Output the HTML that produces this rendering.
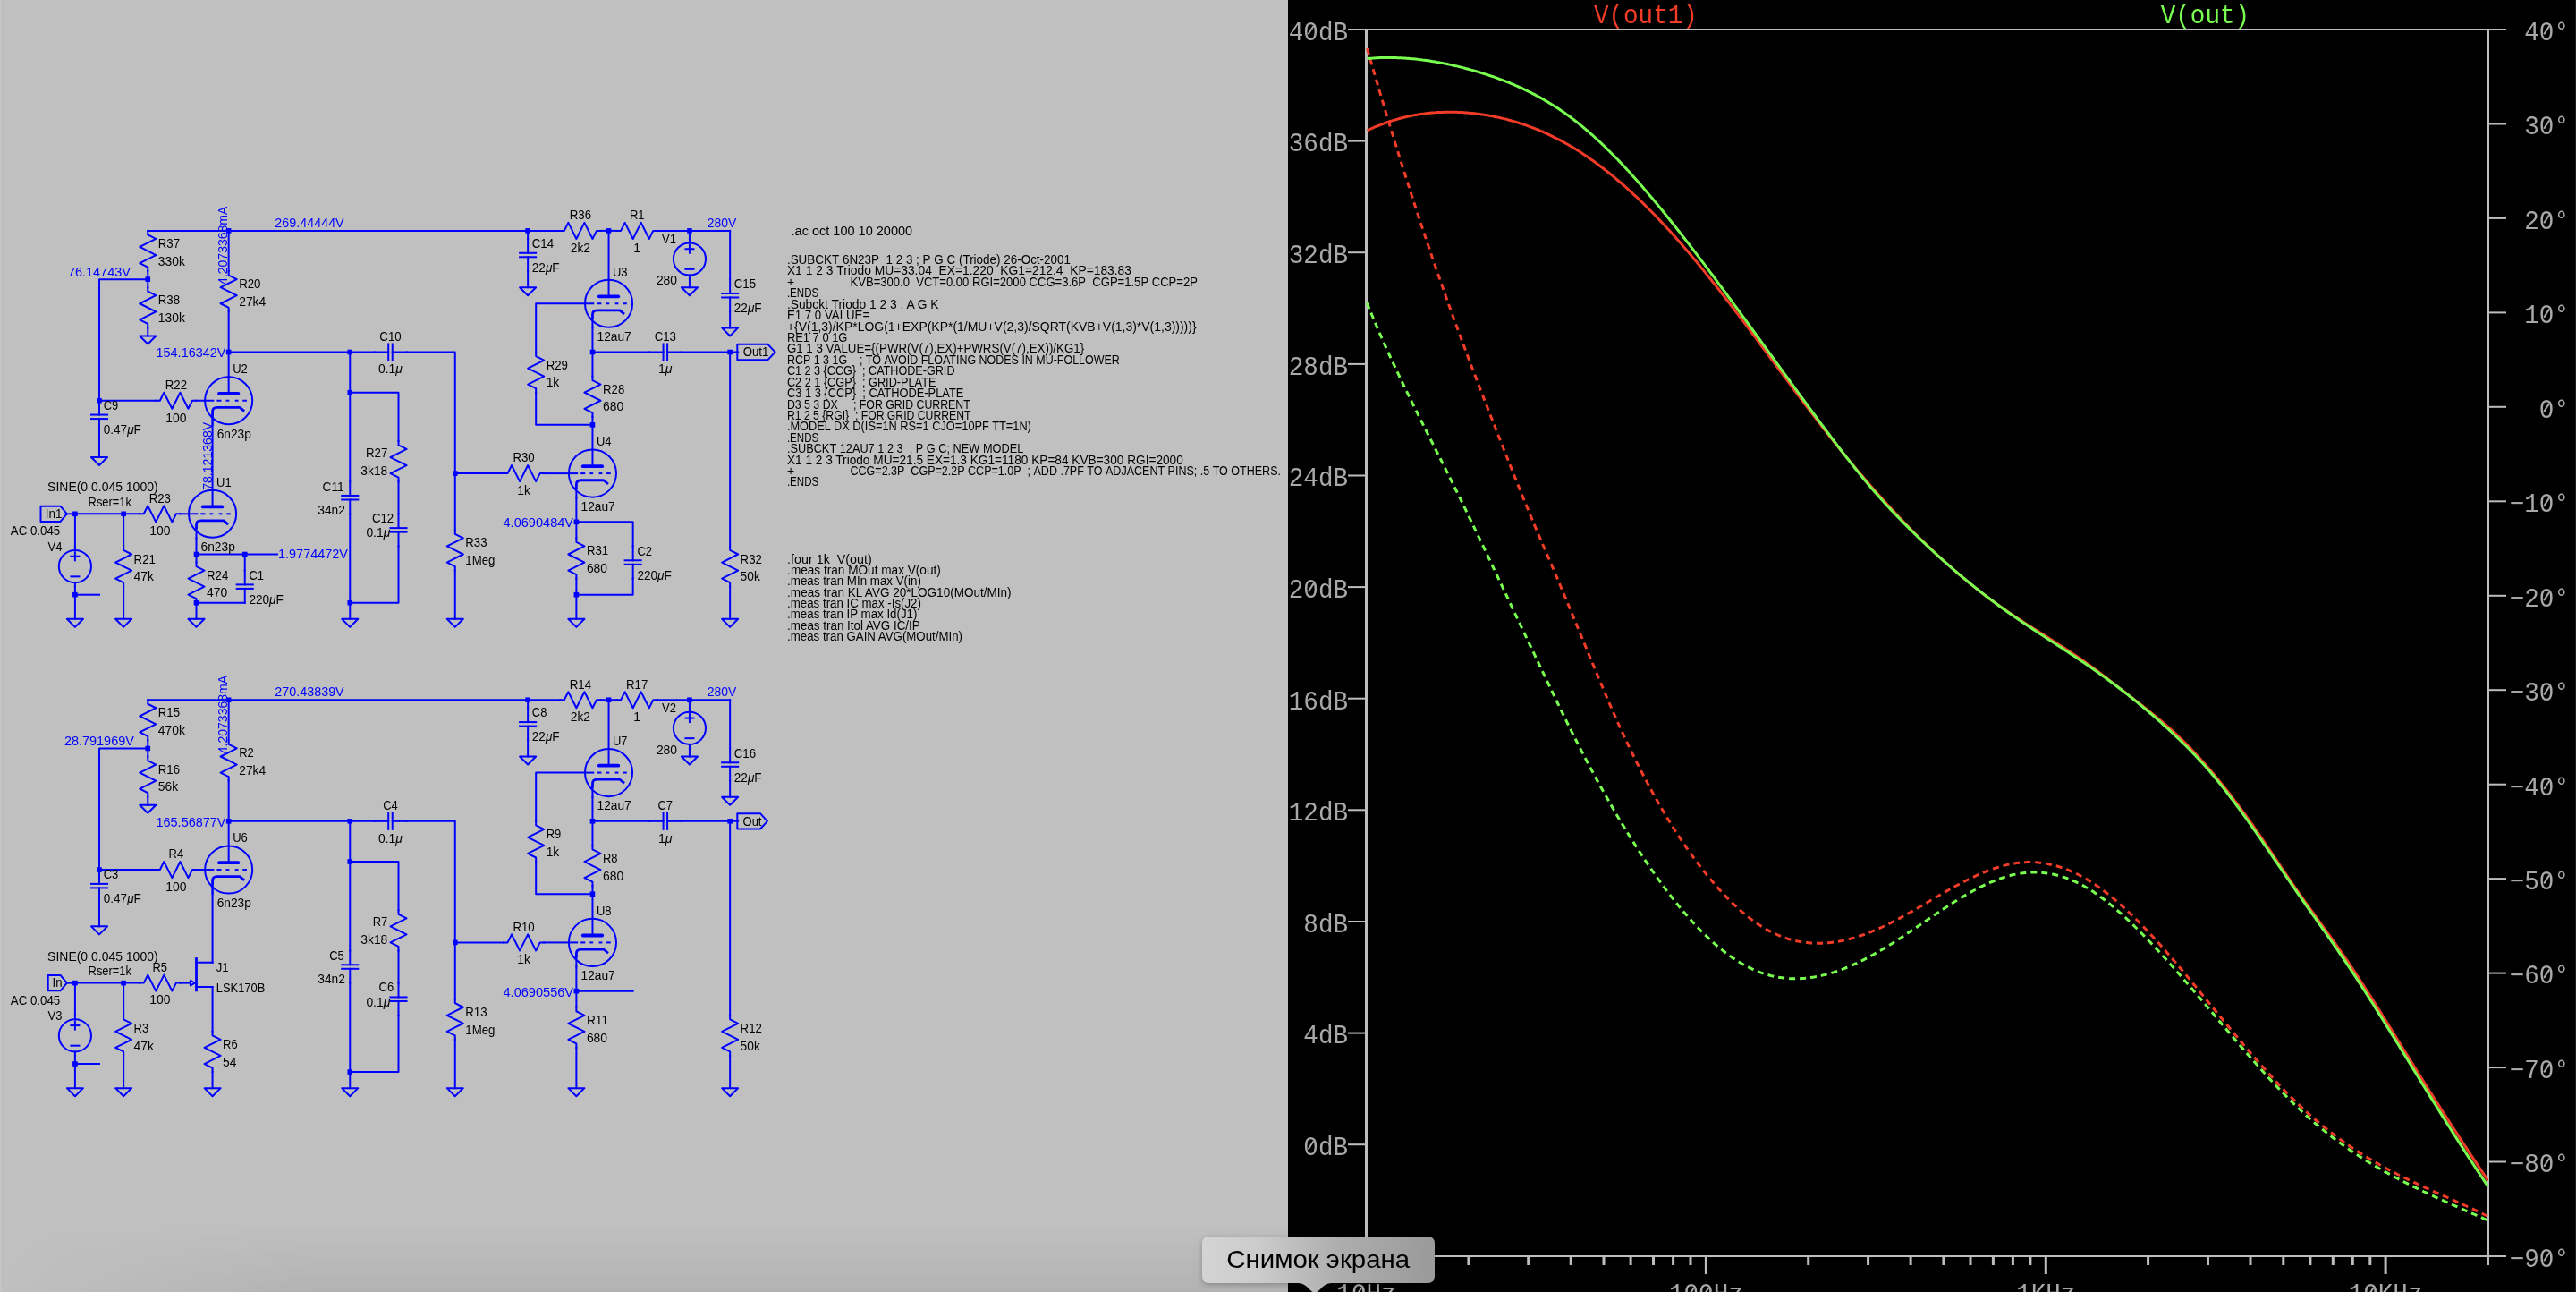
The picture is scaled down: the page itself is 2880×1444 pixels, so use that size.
<!DOCTYPE html><html><head><meta charset="utf-8"><style>html,body{margin:0;padding:0;width:2880px;height:1444px;overflow:hidden;background:#c0c0c0}svg{display:block;will-change:transform}</style></head><body>
<svg width="2880" height="1444" viewBox="0 0 2880 1444">
<rect x="0" y="0" width="1440" height="1444" fill="#C0C0C0"/>
<g fill="none" stroke="#0000FF" stroke-width="2" stroke-linecap="square" stroke-linejoin="round">
<polyline points="165.26,257.90 626.30,257.90"/>
<polyline points="626.30,257.90 630.82,257.90 635.34,248.86 644.38,266.94 653.42,248.86 662.46,266.94 666.98,257.90 671.50,257.90"/>
<polyline points="671.50,257.90 689.58,257.90"/>
<polyline points="689.58,257.90 694.10,257.90 698.62,248.86 707.66,266.94 716.70,248.86 725.74,266.94 730.26,257.90 734.78,257.90"/>
<polyline points="734.78,257.90 816.14,257.90"/>
<rect x="252.86" y="255.10" width="5.6" height="5.6" fill="#0000FF" stroke="none"/>
<rect x="587.34" y="255.10" width="5.6" height="5.6" fill="#0000FF" stroke="none"/>
<rect x="677.74" y="255.10" width="5.6" height="5.6" fill="#0000FF" stroke="none"/>
<rect x="768.14" y="255.10" width="5.6" height="5.6" fill="#0000FF" stroke="none"/>
<polyline points="165.26,257.90 165.26,262.42 174.30,266.94 156.22,275.98 174.30,285.02 156.22,294.06 165.26,298.58 165.26,303.10"/>
<polyline points="165.26,303.10 165.26,321.18"/>
<rect x="162.46" y="309.34" width="5.6" height="5.6" fill="#0000FF" stroke="none"/>
<polyline points="165.26,321.18 165.26,325.70 174.30,330.22 156.22,339.26 174.30,348.30 156.22,357.34 165.26,361.86 165.26,366.38"/>
<polyline points="165.26,366.38 165.26,375.42"/>
<polygon points="156.22,375.42 174.30,375.42 165.26,384.46"/>
<polyline points="165.26,312.14 111.02,312.14 111.02,447.74"/>
<rect x="108.22" y="444.94" width="5.6" height="5.6" fill="#0000FF" stroke="none"/>
<line x1="111.02" y1="447.74" x2="111.02" y2="463.56"/>
<line x1="101.98" y1="463.56" x2="120.06" y2="463.56"/>
<line x1="101.98" y1="468.08" x2="120.06" y2="468.08"/>
<line x1="111.02" y1="468.08" x2="111.02" y2="483.90"/>
<polyline points="111.02,483.90 111.02,511.02"/>
<polygon points="101.98,511.02 120.06,511.02 111.02,520.06"/>
<polyline points="111.02,447.74 174.30,447.74"/>
<polyline points="174.30,447.74 178.82,447.74 183.34,438.70 192.38,456.78 201.42,438.70 210.46,456.78 214.98,447.74 219.50,447.74"/>
<polyline points="219.50,447.74 228.54,447.74"/>
<polyline points="255.66,303.10 255.66,307.62 264.70,312.14 246.62,321.18 264.70,330.22 246.62,339.26 255.66,343.78 255.66,348.30"/>
<polyline points="255.66,257.90 255.66,303.10"/>
<polyline points="255.66,348.30 255.66,420.62"/>
<rect x="252.86" y="390.70" width="5.6" height="5.6" fill="#0000FF" stroke="none"/>
<circle cx="255.66" cy="447.74" r="26.55"/>
<line x1="255.66" y1="421.18" x2="255.66" y2="439.83"/>
<line x1="244.93" y1="439.83" x2="266.39" y2="439.83" stroke-width="3.8" stroke-linecap="round"/>
<line x1="228.54" y1="447.74" x2="239.39" y2="447.74" stroke-linecap="butt"/>
<line x1="242.38" y1="447.74" x2="247.47" y2="447.74" stroke-linecap="butt"/>
<line x1="252.55" y1="447.74" x2="256.34" y2="447.74" stroke-linecap="butt"/>
<line x1="262.78" y1="447.74" x2="266.56" y2="447.74" stroke-linecap="butt"/>
<line x1="271.25" y1="447.74" x2="275.94" y2="447.74" stroke-linecap="butt"/>
<path d="M237.58,464.69 L237.58,460.17 Q237.58,455.37 242.66,455.37 L268.09,455.37 L273.18,459.60" stroke-width="2.8" stroke-linecap="butt"/>
<line x1="237.58" y1="464.69" x2="237.58" y2="474.86"/>
<polyline points="255.66,393.50 418.38,393.50"/>
<rect x="388.46" y="390.70" width="5.6" height="5.6" fill="#0000FF" stroke="none"/>
<line x1="418.38" y1="393.50" x2="434.20" y2="393.50"/>
<line x1="434.20" y1="384.46" x2="434.20" y2="402.54"/>
<line x1="438.72" y1="384.46" x2="438.72" y2="402.54"/>
<line x1="438.72" y1="393.50" x2="454.54" y2="393.50"/>
<polyline points="454.54,393.50 508.78,393.50 508.78,592.38"/>
<polyline points="508.78,592.38 508.78,596.90 517.82,601.42 499.74,610.46 517.82,619.50 499.74,628.54 508.78,633.06 508.78,637.58"/>
<polyline points="508.78,637.58 508.78,691.82"/>
<polygon points="499.74,691.82 517.82,691.82 508.78,700.86"/>
<rect x="505.98" y="526.30" width="5.6" height="5.6" fill="#0000FF" stroke="none"/>
<polyline points="391.26,393.50 391.26,538.14"/>
<line x1="391.26" y1="538.14" x2="391.26" y2="553.96"/>
<line x1="382.22" y1="553.96" x2="400.30" y2="553.96"/>
<line x1="382.22" y1="558.48" x2="400.30" y2="558.48"/>
<line x1="391.26" y1="558.48" x2="391.26" y2="574.30"/>
<polyline points="391.26,574.30 391.26,691.82"/>
<polygon points="382.22,691.82 400.30,691.82 391.26,700.86"/>
<rect x="388.46" y="435.90" width="5.6" height="5.6" fill="#0000FF" stroke="none"/>
<rect x="388.46" y="670.94" width="5.6" height="5.6" fill="#0000FF" stroke="none"/>
<polyline points="391.26,438.70 445.50,438.70 445.50,492.94"/>
<polyline points="445.50,492.94 445.50,497.46 454.54,501.98 436.46,511.02 454.54,520.06 436.46,529.10 445.50,533.62 445.50,538.14"/>
<polyline points="445.50,538.14 445.50,574.30"/>
<line x1="445.50" y1="574.30" x2="445.50" y2="590.12"/>
<line x1="436.46" y1="590.12" x2="454.54" y2="590.12"/>
<line x1="436.46" y1="594.64" x2="454.54" y2="594.64"/>
<line x1="445.50" y1="594.64" x2="445.50" y2="610.46"/>
<polyline points="445.50,610.46 445.50,673.74 391.26,673.74"/>
<polyline points="508.78,529.10 563.02,529.10"/>
<polyline points="563.02,529.10 567.54,529.10 572.06,520.06 581.10,538.14 590.14,520.06 599.18,538.14 603.70,529.10 608.22,529.10"/>
<polyline points="608.22,529.10 635.34,529.10"/>
<line x1="590.14" y1="266.94" x2="590.14" y2="282.76"/>
<line x1="581.10" y1="282.76" x2="599.18" y2="282.76"/>
<line x1="581.10" y1="287.28" x2="599.18" y2="287.28"/>
<line x1="590.14" y1="287.28" x2="590.14" y2="303.10"/>
<polyline points="590.14,257.90 590.14,266.94"/>
<polyline points="590.14,303.10 590.14,321.18"/>
<polygon points="581.10,321.18 599.18,321.18 590.14,330.22"/>
<line x1="770.94" y1="266.94" x2="770.94" y2="271.46"/>
<circle cx="770.94" cy="289.54" r="18.08"/>
<line x1="770.94" y1="307.62" x2="770.94" y2="312.14"/>
<line x1="766.42" y1="278.24" x2="775.46" y2="278.24"/>
<line x1="770.94" y1="273.72" x2="770.94" y2="282.76"/>
<line x1="766.42" y1="300.84" x2="775.46" y2="300.84"/>
<polyline points="770.94,257.90 770.94,266.94"/>
<polyline points="770.94,312.14 770.94,321.18"/>
<polygon points="761.90,321.18 779.98,321.18 770.94,330.22"/>
<polyline points="816.14,257.90 816.14,312.14"/>
<line x1="816.14" y1="312.14" x2="816.14" y2="327.96"/>
<line x1="807.10" y1="327.96" x2="825.18" y2="327.96"/>
<line x1="807.10" y1="332.48" x2="825.18" y2="332.48"/>
<line x1="816.14" y1="332.48" x2="816.14" y2="348.30"/>
<polyline points="816.14,348.30 816.14,366.38"/>
<polygon points="807.10,366.38 825.18,366.38 816.14,375.42"/>
<polyline points="680.54,257.90 680.54,312.14"/>
<circle cx="680.54" cy="339.26" r="26.55"/>
<line x1="680.54" y1="312.70" x2="680.54" y2="331.35"/>
<line x1="669.80" y1="331.35" x2="691.27" y2="331.35" stroke-width="3.8" stroke-linecap="round"/>
<line x1="653.42" y1="339.26" x2="664.27" y2="339.26" stroke-linecap="butt"/>
<line x1="667.26" y1="339.26" x2="672.35" y2="339.26" stroke-linecap="butt"/>
<line x1="677.43" y1="339.26" x2="681.22" y2="339.26" stroke-linecap="butt"/>
<line x1="687.66" y1="339.26" x2="691.44" y2="339.26" stroke-linecap="butt"/>
<line x1="696.13" y1="339.26" x2="700.82" y2="339.26" stroke-linecap="butt"/>
<path d="M662.46,356.21 L662.46,351.69 Q662.46,346.89 667.54,346.89 L692.97,346.89 L698.05,351.12" stroke-width="2.8" stroke-linecap="butt"/>
<line x1="662.46" y1="356.21" x2="662.46" y2="366.38"/>
<polyline points="653.42,339.26 599.18,339.26 599.18,393.50"/>
<polyline points="599.18,393.50 599.18,398.02 608.22,402.54 590.14,411.58 608.22,420.62 590.14,429.66 599.18,434.18 599.18,438.70"/>
<polyline points="599.18,438.70 599.18,474.86 662.46,474.86"/>
<rect x="659.66" y="472.06" width="5.6" height="5.6" fill="#0000FF" stroke="none"/>
<polyline points="662.46,366.38 662.46,420.62"/>
<rect x="659.66" y="390.70" width="5.6" height="5.6" fill="#0000FF" stroke="none"/>
<polyline points="662.46,420.62 662.46,425.14 671.50,429.66 653.42,438.70 671.50,447.74 653.42,456.78 662.46,461.30 662.46,465.82"/>
<polyline points="662.46,465.82 662.46,501.98"/>
<polyline points="662.46,393.50 725.74,393.50"/>
<line x1="725.74" y1="393.50" x2="741.56" y2="393.50"/>
<line x1="741.56" y1="384.46" x2="741.56" y2="402.54"/>
<line x1="746.08" y1="384.46" x2="746.08" y2="402.54"/>
<line x1="746.08" y1="393.50" x2="761.90" y2="393.50"/>
<polyline points="761.90,393.50 825.18,393.50"/>
<rect x="813.34" y="390.70" width="5.6" height="5.6" fill="#0000FF" stroke="none"/>
<polyline points="816.14,393.50 816.14,610.46"/>
<polyline points="816.14,610.46 816.14,614.98 825.18,619.50 807.10,628.54 825.18,637.58 807.10,646.62 816.14,651.14 816.14,655.66"/>
<polyline points="816.14,655.66 816.14,691.82"/>
<polygon points="807.10,691.82 825.18,691.82 816.14,700.86"/>
<circle cx="662.46" cy="529.10" r="26.55"/>
<line x1="662.46" y1="502.54" x2="662.46" y2="521.19"/>
<line x1="651.72" y1="521.19" x2="673.19" y2="521.19" stroke-width="3.8" stroke-linecap="round"/>
<line x1="635.34" y1="529.10" x2="646.19" y2="529.10" stroke-linecap="butt"/>
<line x1="649.18" y1="529.10" x2="654.27" y2="529.10" stroke-linecap="butt"/>
<line x1="659.35" y1="529.10" x2="663.14" y2="529.10" stroke-linecap="butt"/>
<line x1="669.58" y1="529.10" x2="673.36" y2="529.10" stroke-linecap="butt"/>
<line x1="678.05" y1="529.10" x2="682.74" y2="529.10" stroke-linecap="butt"/>
<path d="M644.38,546.05 L644.38,541.53 Q644.38,536.73 649.46,536.73 L674.89,536.73 L679.97,540.96" stroke-width="2.8" stroke-linecap="butt"/>
<line x1="644.38" y1="546.05" x2="644.38" y2="556.22"/>
<polyline points="644.38,556.22 644.38,601.42"/>
<rect x="641.58" y="580.54" width="5.6" height="5.6" fill="#0000FF" stroke="none"/>
<polyline points="644.38,601.42 644.38,605.94 653.42,610.46 635.34,619.50 653.42,628.54 635.34,637.58 644.38,642.10 644.38,646.62"/>
<polyline points="644.38,583.34 707.66,583.34 707.66,610.46"/>
<line x1="707.66" y1="610.46" x2="707.66" y2="626.28"/>
<line x1="698.62" y1="626.28" x2="716.70" y2="626.28"/>
<line x1="698.62" y1="630.80" x2="716.70" y2="630.80"/>
<line x1="707.66" y1="630.80" x2="707.66" y2="646.62"/>
<polyline points="707.66,646.62 707.66,664.70 644.38,664.70"/>
<rect x="641.58" y="661.90" width="5.6" height="5.6" fill="#0000FF" stroke="none"/>
<polyline points="644.38,646.62 644.38,691.82"/>
<polygon points="635.34,691.82 653.42,691.82 644.38,700.86"/>
<polyline points="83.90,574.30 156.22,574.30"/>
<rect x="81.10" y="571.50" width="5.6" height="5.6" fill="#0000FF" stroke="none"/>
<rect x="135.34" y="571.50" width="5.6" height="5.6" fill="#0000FF" stroke="none"/>
<polyline points="156.22,574.30 160.74,574.30 165.26,565.26 174.30,583.34 183.34,565.26 192.38,583.34 196.90,574.30 201.42,574.30"/>
<line x1="83.90" y1="610.46" x2="83.90" y2="614.98"/>
<circle cx="83.90" cy="633.06" r="18.08"/>
<line x1="83.90" y1="651.14" x2="83.90" y2="655.66"/>
<line x1="79.38" y1="621.76" x2="88.42" y2="621.76"/>
<line x1="83.90" y1="617.24" x2="83.90" y2="626.28"/>
<line x1="79.38" y1="644.36" x2="88.42" y2="644.36"/>
<polyline points="83.90,574.30 83.90,610.46"/>
<polyline points="83.90,655.66 83.90,691.82"/>
<rect x="81.10" y="661.90" width="5.6" height="5.6" fill="#0000FF" stroke="none"/>
<polyline points="83.90,664.70 111.02,664.70"/>
<polygon points="74.86,691.82 92.94,691.82 83.90,700.86"/>
<polyline points="138.14,574.30 138.14,610.46"/>
<polyline points="138.14,610.46 138.14,614.98 147.18,619.50 129.10,628.54 147.18,637.58 129.10,646.62 138.14,651.14 138.14,655.66"/>
<polyline points="138.14,655.66 138.14,691.82"/>
<polygon points="129.10,691.82 147.18,691.82 138.14,700.86"/>
<polyline points="201.42,574.30 210.46,574.30"/>
<polyline points="237.58,465.82 237.58,547.18"/>
<circle cx="237.58" cy="574.30" r="26.55"/>
<line x1="237.58" y1="547.75" x2="237.58" y2="566.39"/>
<line x1="226.84" y1="566.39" x2="248.31" y2="566.39" stroke-width="3.8" stroke-linecap="round"/>
<line x1="210.46" y1="574.30" x2="221.31" y2="574.30" stroke-linecap="butt"/>
<line x1="224.30" y1="574.30" x2="229.39" y2="574.30" stroke-linecap="butt"/>
<line x1="234.47" y1="574.30" x2="238.26" y2="574.30" stroke-linecap="butt"/>
<line x1="244.70" y1="574.30" x2="248.48" y2="574.30" stroke-linecap="butt"/>
<line x1="253.17" y1="574.30" x2="257.86" y2="574.30" stroke-linecap="butt"/>
<path d="M219.50,591.25 L219.50,586.73 Q219.50,581.93 224.58,581.93 L250.01,581.93 L255.09,586.16" stroke-width="2.8" stroke-linecap="butt"/>
<line x1="219.50" y1="591.25" x2="219.50" y2="601.42"/>
<polyline points="219.50,601.42 219.50,628.54"/>
<rect x="216.70" y="616.70" width="5.6" height="5.6" fill="#0000FF" stroke="none"/>
<polyline points="219.50,628.54 219.50,633.06 228.54,637.58 210.46,646.62 228.54,655.66 210.46,664.70 219.50,669.22 219.50,673.74"/>
<polyline points="219.50,673.74 219.50,691.82"/>
<rect x="216.70" y="670.94" width="5.6" height="5.6" fill="#0000FF" stroke="none"/>
<polygon points="210.46,691.82 228.54,691.82 219.50,700.86"/>
<polyline points="219.50,619.50 309.90,619.50"/>
<rect x="270.94" y="616.70" width="5.6" height="5.6" fill="#0000FF" stroke="none"/>
<polyline points="273.74,619.50 273.74,637.58"/>
<line x1="273.74" y1="637.58" x2="273.74" y2="653.40"/>
<line x1="264.70" y1="653.40" x2="282.78" y2="653.40"/>
<line x1="264.70" y1="657.92" x2="282.78" y2="657.92"/>
<line x1="273.74" y1="657.92" x2="273.74" y2="673.74"/>
<polyline points="273.74,673.74 219.50,673.74"/>
<polyline points="165.26,782.22 626.30,782.22"/>
<polyline points="626.30,782.22 630.82,782.22 635.34,773.18 644.38,791.26 653.42,773.18 662.46,791.26 666.98,782.22 671.50,782.22"/>
<polyline points="671.50,782.22 689.58,782.22"/>
<polyline points="689.58,782.22 694.10,782.22 698.62,773.18 707.66,791.26 716.70,773.18 725.74,791.26 730.26,782.22 734.78,782.22"/>
<polyline points="734.78,782.22 816.14,782.22"/>
<rect x="252.86" y="779.42" width="5.6" height="5.6" fill="#0000FF" stroke="none"/>
<rect x="587.34" y="779.42" width="5.6" height="5.6" fill="#0000FF" stroke="none"/>
<rect x="677.74" y="779.42" width="5.6" height="5.6" fill="#0000FF" stroke="none"/>
<rect x="768.14" y="779.42" width="5.6" height="5.6" fill="#0000FF" stroke="none"/>
<polyline points="165.26,782.22 165.26,786.74 174.30,791.26 156.22,800.30 174.30,809.34 156.22,818.38 165.26,822.90 165.26,827.42"/>
<polyline points="165.26,827.42 165.26,845.50"/>
<rect x="162.46" y="833.66" width="5.6" height="5.6" fill="#0000FF" stroke="none"/>
<polyline points="165.26,845.50 165.26,850.02 174.30,854.54 156.22,863.58 174.30,872.62 156.22,881.66 165.26,886.18 165.26,890.70"/>
<polyline points="165.26,890.70 165.26,899.74"/>
<polygon points="156.22,899.74 174.30,899.74 165.26,908.78"/>
<polyline points="165.26,836.46 111.02,836.46 111.02,972.06"/>
<rect x="108.22" y="969.26" width="5.6" height="5.6" fill="#0000FF" stroke="none"/>
<line x1="111.02" y1="972.06" x2="111.02" y2="987.88"/>
<line x1="101.98" y1="987.88" x2="120.06" y2="987.88"/>
<line x1="101.98" y1="992.40" x2="120.06" y2="992.40"/>
<line x1="111.02" y1="992.40" x2="111.02" y2="1008.22"/>
<polyline points="111.02,1008.22 111.02,1035.34"/>
<polygon points="101.98,1035.34 120.06,1035.34 111.02,1044.38"/>
<polyline points="111.02,972.06 174.30,972.06"/>
<polyline points="174.30,972.06 178.82,972.06 183.34,963.02 192.38,981.10 201.42,963.02 210.46,981.10 214.98,972.06 219.50,972.06"/>
<polyline points="219.50,972.06 228.54,972.06"/>
<polyline points="255.66,827.42 255.66,831.94 264.70,836.46 246.62,845.50 264.70,854.54 246.62,863.58 255.66,868.10 255.66,872.62"/>
<polyline points="255.66,782.22 255.66,827.42"/>
<polyline points="255.66,872.62 255.66,944.94"/>
<rect x="252.86" y="915.02" width="5.6" height="5.6" fill="#0000FF" stroke="none"/>
<circle cx="255.66" cy="972.06" r="26.55"/>
<line x1="255.66" y1="945.50" x2="255.66" y2="964.15"/>
<line x1="244.93" y1="964.15" x2="266.39" y2="964.15" stroke-width="3.8" stroke-linecap="round"/>
<line x1="228.54" y1="972.06" x2="239.39" y2="972.06" stroke-linecap="butt"/>
<line x1="242.38" y1="972.06" x2="247.47" y2="972.06" stroke-linecap="butt"/>
<line x1="252.55" y1="972.06" x2="256.34" y2="972.06" stroke-linecap="butt"/>
<line x1="262.78" y1="972.06" x2="266.56" y2="972.06" stroke-linecap="butt"/>
<line x1="271.25" y1="972.06" x2="275.94" y2="972.06" stroke-linecap="butt"/>
<path d="M237.58,989.01 L237.58,984.49 Q237.58,979.69 242.66,979.69 L268.09,979.69 L273.18,983.92" stroke-width="2.8" stroke-linecap="butt"/>
<line x1="237.58" y1="989.01" x2="237.58" y2="999.18"/>
<polyline points="255.66,917.82 418.38,917.82"/>
<rect x="388.46" y="915.02" width="5.6" height="5.6" fill="#0000FF" stroke="none"/>
<line x1="418.38" y1="917.82" x2="434.20" y2="917.82"/>
<line x1="434.20" y1="908.78" x2="434.20" y2="926.86"/>
<line x1="438.72" y1="908.78" x2="438.72" y2="926.86"/>
<line x1="438.72" y1="917.82" x2="454.54" y2="917.82"/>
<polyline points="454.54,917.82 508.78,917.82 508.78,1116.70"/>
<polyline points="508.78,1116.70 508.78,1121.22 517.82,1125.74 499.74,1134.78 517.82,1143.82 499.74,1152.86 508.78,1157.38 508.78,1161.90"/>
<polyline points="508.78,1161.90 508.78,1216.14"/>
<polygon points="499.74,1216.14 517.82,1216.14 508.78,1225.18"/>
<rect x="505.98" y="1050.62" width="5.6" height="5.6" fill="#0000FF" stroke="none"/>
<polyline points="391.26,917.82 391.26,1062.46"/>
<line x1="391.26" y1="1062.46" x2="391.26" y2="1078.28"/>
<line x1="382.22" y1="1078.28" x2="400.30" y2="1078.28"/>
<line x1="382.22" y1="1082.80" x2="400.30" y2="1082.80"/>
<line x1="391.26" y1="1082.80" x2="391.26" y2="1098.62"/>
<polyline points="391.26,1098.62 391.26,1216.14"/>
<polygon points="382.22,1216.14 400.30,1216.14 391.26,1225.18"/>
<rect x="388.46" y="960.22" width="5.6" height="5.6" fill="#0000FF" stroke="none"/>
<rect x="388.46" y="1195.26" width="5.6" height="5.6" fill="#0000FF" stroke="none"/>
<polyline points="391.26,963.02 445.50,963.02 445.50,1017.26"/>
<polyline points="445.50,1017.26 445.50,1021.78 454.54,1026.30 436.46,1035.34 454.54,1044.38 436.46,1053.42 445.50,1057.94 445.50,1062.46"/>
<polyline points="445.50,1062.46 445.50,1098.62"/>
<line x1="445.50" y1="1098.62" x2="445.50" y2="1114.44"/>
<line x1="436.46" y1="1114.44" x2="454.54" y2="1114.44"/>
<line x1="436.46" y1="1118.96" x2="454.54" y2="1118.96"/>
<line x1="445.50" y1="1118.96" x2="445.50" y2="1134.78"/>
<polyline points="445.50,1134.78 445.50,1198.06 391.26,1198.06"/>
<polyline points="508.78,1053.42 563.02,1053.42"/>
<polyline points="563.02,1053.42 567.54,1053.42 572.06,1044.38 581.10,1062.46 590.14,1044.38 599.18,1062.46 603.70,1053.42 608.22,1053.42"/>
<polyline points="608.22,1053.42 635.34,1053.42"/>
<line x1="590.14" y1="791.26" x2="590.14" y2="807.08"/>
<line x1="581.10" y1="807.08" x2="599.18" y2="807.08"/>
<line x1="581.10" y1="811.60" x2="599.18" y2="811.60"/>
<line x1="590.14" y1="811.60" x2="590.14" y2="827.42"/>
<polyline points="590.14,782.22 590.14,791.26"/>
<polyline points="590.14,827.42 590.14,845.50"/>
<polygon points="581.10,845.50 599.18,845.50 590.14,854.54"/>
<line x1="770.94" y1="791.26" x2="770.94" y2="795.78"/>
<circle cx="770.94" cy="813.86" r="18.08"/>
<line x1="770.94" y1="831.94" x2="770.94" y2="836.46"/>
<line x1="766.42" y1="802.56" x2="775.46" y2="802.56"/>
<line x1="770.94" y1="798.04" x2="770.94" y2="807.08"/>
<line x1="766.42" y1="825.16" x2="775.46" y2="825.16"/>
<polyline points="770.94,782.22 770.94,791.26"/>
<polyline points="770.94,836.46 770.94,845.50"/>
<polygon points="761.90,845.50 779.98,845.50 770.94,854.54"/>
<polyline points="816.14,782.22 816.14,836.46"/>
<line x1="816.14" y1="836.46" x2="816.14" y2="852.28"/>
<line x1="807.10" y1="852.28" x2="825.18" y2="852.28"/>
<line x1="807.10" y1="856.80" x2="825.18" y2="856.80"/>
<line x1="816.14" y1="856.80" x2="816.14" y2="872.62"/>
<polyline points="816.14,872.62 816.14,890.70"/>
<polygon points="807.10,890.70 825.18,890.70 816.14,899.74"/>
<polyline points="680.54,782.22 680.54,836.46"/>
<circle cx="680.54" cy="863.58" r="26.55"/>
<line x1="680.54" y1="837.02" x2="680.54" y2="855.67"/>
<line x1="669.80" y1="855.67" x2="691.27" y2="855.67" stroke-width="3.8" stroke-linecap="round"/>
<line x1="653.42" y1="863.58" x2="664.27" y2="863.58" stroke-linecap="butt"/>
<line x1="667.26" y1="863.58" x2="672.35" y2="863.58" stroke-linecap="butt"/>
<line x1="677.43" y1="863.58" x2="681.22" y2="863.58" stroke-linecap="butt"/>
<line x1="687.66" y1="863.58" x2="691.44" y2="863.58" stroke-linecap="butt"/>
<line x1="696.13" y1="863.58" x2="700.82" y2="863.58" stroke-linecap="butt"/>
<path d="M662.46,880.53 L662.46,876.01 Q662.46,871.21 667.54,871.21 L692.97,871.21 L698.05,875.44" stroke-width="2.8" stroke-linecap="butt"/>
<line x1="662.46" y1="880.53" x2="662.46" y2="890.70"/>
<polyline points="653.42,863.58 599.18,863.58 599.18,917.82"/>
<polyline points="599.18,917.82 599.18,922.34 608.22,926.86 590.14,935.90 608.22,944.94 590.14,953.98 599.18,958.50 599.18,963.02"/>
<polyline points="599.18,963.02 599.18,999.18 662.46,999.18"/>
<rect x="659.66" y="996.38" width="5.6" height="5.6" fill="#0000FF" stroke="none"/>
<polyline points="662.46,890.70 662.46,944.94"/>
<rect x="659.66" y="915.02" width="5.6" height="5.6" fill="#0000FF" stroke="none"/>
<polyline points="662.46,944.94 662.46,949.46 671.50,953.98 653.42,963.02 671.50,972.06 653.42,981.10 662.46,985.62 662.46,990.14"/>
<polyline points="662.46,990.14 662.46,1026.30"/>
<polyline points="662.46,917.82 725.74,917.82"/>
<line x1="725.74" y1="917.82" x2="741.56" y2="917.82"/>
<line x1="741.56" y1="908.78" x2="741.56" y2="926.86"/>
<line x1="746.08" y1="908.78" x2="746.08" y2="926.86"/>
<line x1="746.08" y1="917.82" x2="761.90" y2="917.82"/>
<polyline points="761.90,917.82 825.18,917.82"/>
<rect x="813.34" y="915.02" width="5.6" height="5.6" fill="#0000FF" stroke="none"/>
<polyline points="816.14,917.82 816.14,1134.78"/>
<polyline points="816.14,1134.78 816.14,1139.30 825.18,1143.82 807.10,1152.86 825.18,1161.90 807.10,1170.94 816.14,1175.46 816.14,1179.98"/>
<polyline points="816.14,1179.98 816.14,1216.14"/>
<polygon points="807.10,1216.14 825.18,1216.14 816.14,1225.18"/>
<circle cx="662.46" cy="1053.42" r="26.55"/>
<line x1="662.46" y1="1026.87" x2="662.46" y2="1045.51"/>
<line x1="651.72" y1="1045.51" x2="673.19" y2="1045.51" stroke-width="3.8" stroke-linecap="round"/>
<line x1="635.34" y1="1053.42" x2="646.19" y2="1053.42" stroke-linecap="butt"/>
<line x1="649.18" y1="1053.42" x2="654.27" y2="1053.42" stroke-linecap="butt"/>
<line x1="659.35" y1="1053.42" x2="663.14" y2="1053.42" stroke-linecap="butt"/>
<line x1="669.58" y1="1053.42" x2="673.36" y2="1053.42" stroke-linecap="butt"/>
<line x1="678.05" y1="1053.42" x2="682.74" y2="1053.42" stroke-linecap="butt"/>
<path d="M644.38,1070.37 L644.38,1065.85 Q644.38,1061.05 649.46,1061.05 L674.89,1061.05 L679.97,1065.29" stroke-width="2.8" stroke-linecap="butt"/>
<line x1="644.38" y1="1070.37" x2="644.38" y2="1080.54"/>
<polyline points="644.38,1080.54 644.38,1125.74"/>
<rect x="641.58" y="1104.86" width="5.6" height="5.6" fill="#0000FF" stroke="none"/>
<polyline points="644.38,1125.74 644.38,1130.26 653.42,1134.78 635.34,1143.82 653.42,1152.86 635.34,1161.90 644.38,1166.42 644.38,1170.94"/>
<polyline points="644.38,1107.66 707.66,1107.66"/>
<polyline points="644.38,1170.94 644.38,1216.14"/>
<polygon points="635.34,1216.14 653.42,1216.14 644.38,1225.18"/>
<polyline points="83.90,1098.62 156.22,1098.62"/>
<rect x="81.10" y="1095.82" width="5.6" height="5.6" fill="#0000FF" stroke="none"/>
<rect x="135.34" y="1095.82" width="5.6" height="5.6" fill="#0000FF" stroke="none"/>
<polyline points="156.22,1098.62 160.74,1098.62 165.26,1089.58 174.30,1107.66 183.34,1089.58 192.38,1107.66 196.90,1098.62 201.42,1098.62"/>
<line x1="83.90" y1="1134.78" x2="83.90" y2="1139.30"/>
<circle cx="83.90" cy="1157.38" r="18.08"/>
<line x1="83.90" y1="1175.46" x2="83.90" y2="1179.98"/>
<line x1="79.38" y1="1146.08" x2="88.42" y2="1146.08"/>
<line x1="83.90" y1="1141.56" x2="83.90" y2="1150.60"/>
<line x1="79.38" y1="1168.68" x2="88.42" y2="1168.68"/>
<polyline points="83.90,1098.62 83.90,1134.78"/>
<polyline points="83.90,1179.98 83.90,1216.14"/>
<rect x="81.10" y="1186.22" width="5.6" height="5.6" fill="#0000FF" stroke="none"/>
<polyline points="83.90,1189.02 111.02,1189.02"/>
<polygon points="74.86,1216.14 92.94,1216.14 83.90,1225.18"/>
<polyline points="138.14,1098.62 138.14,1134.78"/>
<polyline points="138.14,1134.78 138.14,1139.30 147.18,1143.82 129.10,1152.86 147.18,1161.90 129.10,1170.94 138.14,1175.46 138.14,1179.98"/>
<polyline points="138.14,1179.98 138.14,1216.14"/>
<polygon points="129.10,1216.14 147.18,1216.14 138.14,1225.18"/>
<polyline points="237.58,990.14 237.58,1075.72"/>
<line x1="219.50" y1="1071.52" x2="219.50" y2="1106.82" stroke-width="2.8"/>
<polyline points="219.50,1075.72 237.60,1075.72"/>
<polyline points="219.50,1103.02 237.60,1103.02"/>
<polygon points="218.00,1098.62 212.90,1095.82 212.90,1101.42"/>
<polyline points="201.42,1098.62 212.90,1098.62"/>
<polyline points="237.58,1103.02 237.58,1152.86"/>
<polyline points="237.58,1152.86 237.58,1157.38 246.62,1161.90 228.54,1170.94 246.62,1179.98 228.54,1189.02 237.58,1193.54 237.58,1198.06"/>
<polyline points="237.58,1198.06 237.58,1216.14"/>
<polygon points="228.54,1216.14 246.62,1216.14 237.58,1225.18"/>
<polygon points="45.50,565.65 67.50,565.65 74.80,574.30 67.50,582.95 45.50,582.95"/>
<polyline points="74.80,574.30 83.90,574.30"/>
<polygon points="53.70,1089.97 67.50,1089.97 74.80,1098.62 67.50,1107.27 53.70,1107.27"/>
<polyline points="74.80,1098.62 83.90,1098.62"/>
<polygon points="824.30,384.85 858.50,384.85 866.60,393.50 858.50,402.15 824.30,402.15"/>
<polygon points="824.30,909.17 850.00,909.17 857.90,917.82 850.00,926.47 824.30,926.47"/>
</g>
<text x="176.8" y="276.9" font-family="Liberation Sans" font-size="14.0" fill="#000000" text-anchor="start" textLength="24.3" lengthAdjust="spacingAndGlyphs">R37</text>
<text x="176.8" y="296.7" font-family="Liberation Sans" font-size="14.0" fill="#000000" text-anchor="start" textLength="30.1" lengthAdjust="spacingAndGlyphs">330k</text>
<text x="176.8" y="340.2" font-family="Liberation Sans" font-size="14.0" fill="#000000" text-anchor="start" textLength="24.3" lengthAdjust="spacingAndGlyphs">R38</text>
<text x="176.8" y="360.0" font-family="Liberation Sans" font-size="14.0" fill="#000000" text-anchor="start" textLength="30.1" lengthAdjust="spacingAndGlyphs">130k</text>
<text x="267.2" y="322.1" font-family="Liberation Sans" font-size="14.0" fill="#000000" text-anchor="start" textLength="24.3" lengthAdjust="spacingAndGlyphs">R20</text>
<text x="267.2" y="341.9" font-family="Liberation Sans" font-size="14.0" fill="#000000" text-anchor="start" textLength="30.0" lengthAdjust="spacingAndGlyphs">27k4</text>
<text x="115.7" y="457.8" font-family="Liberation Sans" font-size="14.0" fill="#000000" text-anchor="start" textLength="16.6" lengthAdjust="spacingAndGlyphs">C9</text>
<text x="115.7" y="484.9" font-family="Liberation Sans" font-size="14.0" fill="#000000" text-anchor="start" textLength="42.2" lengthAdjust="spacingAndGlyphs">0.47<tspan font-style="italic">μ</tspan>F</text>
<text x="196.9" y="435.1" font-family="Liberation Sans" font-size="14.0" fill="#000000" text-anchor="middle" textLength="24.3" lengthAdjust="spacingAndGlyphs">R22</text>
<text x="196.9" y="471.6" font-family="Liberation Sans" font-size="14.0" fill="#000000" text-anchor="middle" textLength="23.2" lengthAdjust="spacingAndGlyphs">100</text>
<text x="260.2" y="417.1" font-family="Liberation Sans" font-size="14.0" fill="#000000" text-anchor="start" textLength="16.6" lengthAdjust="spacingAndGlyphs">U2</text>
<text x="242.7" y="489.6" font-family="Liberation Sans" font-size="14.0" fill="#000000" text-anchor="start" textLength="38.2" lengthAdjust="spacingAndGlyphs">6n23p</text>
<text x="149.6" y="629.5" font-family="Liberation Sans" font-size="14.0" fill="#000000" text-anchor="start" textLength="24.3" lengthAdjust="spacingAndGlyphs">R21</text>
<text x="149.6" y="649.3" font-family="Liberation Sans" font-size="14.0" fill="#000000" text-anchor="start" textLength="22.3" lengthAdjust="spacingAndGlyphs">47k</text>
<text x="178.8" y="561.6" font-family="Liberation Sans" font-size="14.0" fill="#000000" text-anchor="middle" textLength="24.3" lengthAdjust="spacingAndGlyphs">R23</text>
<text x="178.8" y="598.1" font-family="Liberation Sans" font-size="14.0" fill="#000000" text-anchor="middle" textLength="23.2" lengthAdjust="spacingAndGlyphs">100</text>
<text x="384.8" y="548.5" font-family="Liberation Sans" font-size="14.0" fill="#000000" text-anchor="end" textLength="24.3" lengthAdjust="spacingAndGlyphs">C11</text>
<text x="385.9" y="574.9" font-family="Liberation Sans" font-size="14.0" fill="#000000" text-anchor="end" textLength="30.6" lengthAdjust="spacingAndGlyphs">34n2</text>
<text x="433.3" y="511.0" font-family="Liberation Sans" font-size="14.0" fill="#000000" text-anchor="end" textLength="24.3" lengthAdjust="spacingAndGlyphs">R27</text>
<text x="433.3" y="531.0" font-family="Liberation Sans" font-size="14.0" fill="#000000" text-anchor="end" textLength="30.0" lengthAdjust="spacingAndGlyphs">3k18</text>
<text x="440.2" y="583.8" font-family="Liberation Sans" font-size="14.0" fill="#000000" text-anchor="end" textLength="24.3" lengthAdjust="spacingAndGlyphs">C12</text>
<text x="436.3" y="600.3" font-family="Liberation Sans" font-size="14.0" fill="#000000" text-anchor="end" textLength="26.9" lengthAdjust="spacingAndGlyphs">0.1<tspan font-style="italic">μ</tspan></text>
<text x="436.5" y="380.8" font-family="Liberation Sans" font-size="14.0" fill="#000000" text-anchor="middle" textLength="24.3" lengthAdjust="spacingAndGlyphs">C10</text>
<text x="436.5" y="417.3" font-family="Liberation Sans" font-size="14.0" fill="#000000" text-anchor="middle" textLength="26.9" lengthAdjust="spacingAndGlyphs">0.1<tspan font-style="italic">μ</tspan></text>
<text x="520.3" y="611.4" font-family="Liberation Sans" font-size="14.0" fill="#000000" text-anchor="start" textLength="24.3" lengthAdjust="spacingAndGlyphs">R33</text>
<text x="520.3" y="631.2" font-family="Liberation Sans" font-size="14.0" fill="#000000" text-anchor="start" textLength="33.1" lengthAdjust="spacingAndGlyphs">1Meg</text>
<text x="585.6" y="516.4" font-family="Liberation Sans" font-size="14.0" fill="#000000" text-anchor="middle" textLength="24.3" lengthAdjust="spacingAndGlyphs">R30</text>
<text x="585.6" y="552.9" font-family="Liberation Sans" font-size="14.0" fill="#000000" text-anchor="middle" textLength="14.6" lengthAdjust="spacingAndGlyphs">1k</text>
<text x="667.0" y="498.4" font-family="Liberation Sans" font-size="14.0" fill="#000000" text-anchor="start" textLength="16.6" lengthAdjust="spacingAndGlyphs">U4</text>
<text x="649.5" y="570.9" font-family="Liberation Sans" font-size="14.0" fill="#000000" text-anchor="start" textLength="38.2" lengthAdjust="spacingAndGlyphs">12au7</text>
<text x="655.9" y="620.4" font-family="Liberation Sans" font-size="14.0" fill="#000000" text-anchor="start" textLength="24.3" lengthAdjust="spacingAndGlyphs">R31</text>
<text x="655.9" y="640.2" font-family="Liberation Sans" font-size="14.0" fill="#000000" text-anchor="start" textLength="23.2" lengthAdjust="spacingAndGlyphs">680</text>
<text x="827.6" y="629.5" font-family="Liberation Sans" font-size="14.0" fill="#000000" text-anchor="start" textLength="24.3" lengthAdjust="spacingAndGlyphs">R32</text>
<text x="827.6" y="649.3" font-family="Liberation Sans" font-size="14.0" fill="#000000" text-anchor="start" textLength="22.3" lengthAdjust="spacingAndGlyphs">50k</text>
<text x="594.8" y="277.0" font-family="Liberation Sans" font-size="14.0" fill="#000000" text-anchor="start" textLength="24.3" lengthAdjust="spacingAndGlyphs">C14</text>
<text x="594.8" y="304.1" font-family="Liberation Sans" font-size="14.0" fill="#000000" text-anchor="start" textLength="30.8" lengthAdjust="spacingAndGlyphs">22<tspan font-style="italic">μ</tspan>F</text>
<text x="648.9" y="245.2" font-family="Liberation Sans" font-size="14.0" fill="#000000" text-anchor="middle" textLength="24.3" lengthAdjust="spacingAndGlyphs">R36</text>
<text x="648.9" y="281.7" font-family="Liberation Sans" font-size="14.0" fill="#000000" text-anchor="middle" textLength="22.2" lengthAdjust="spacingAndGlyphs">2k2</text>
<text x="712.2" y="245.2" font-family="Liberation Sans" font-size="14.0" fill="#000000" text-anchor="middle" textLength="16.6" lengthAdjust="spacingAndGlyphs">R1</text>
<text x="712.2" y="281.7" font-family="Liberation Sans" font-size="14.0" fill="#000000" text-anchor="middle">1</text>
<text x="756.0" y="272.0" font-family="Liberation Sans" font-size="14.0" fill="#000000" text-anchor="end" textLength="15.9" lengthAdjust="spacingAndGlyphs">V1</text>
<text x="757.1" y="318.4" font-family="Liberation Sans" font-size="14.0" fill="#000000" text-anchor="end" textLength="23.2" lengthAdjust="spacingAndGlyphs">280</text>
<text x="820.8" y="322.2" font-family="Liberation Sans" font-size="14.0" fill="#000000" text-anchor="start" textLength="24.3" lengthAdjust="spacingAndGlyphs">C15</text>
<text x="820.8" y="349.3" font-family="Liberation Sans" font-size="14.0" fill="#000000" text-anchor="start" textLength="30.8" lengthAdjust="spacingAndGlyphs">22<tspan font-style="italic">μ</tspan>F</text>
<text x="685.0" y="308.6" font-family="Liberation Sans" font-size="14.0" fill="#000000" text-anchor="start" textLength="16.6" lengthAdjust="spacingAndGlyphs">U3</text>
<text x="667.5" y="381.1" font-family="Liberation Sans" font-size="14.0" fill="#000000" text-anchor="start" textLength="38.2" lengthAdjust="spacingAndGlyphs">12au7</text>
<text x="610.7" y="412.5" font-family="Liberation Sans" font-size="14.0" fill="#000000" text-anchor="start" textLength="24.3" lengthAdjust="spacingAndGlyphs">R29</text>
<text x="610.7" y="432.3" font-family="Liberation Sans" font-size="14.0" fill="#000000" text-anchor="start" textLength="14.6" lengthAdjust="spacingAndGlyphs">1k</text>
<text x="674.0" y="439.6" font-family="Liberation Sans" font-size="14.0" fill="#000000" text-anchor="start" textLength="24.3" lengthAdjust="spacingAndGlyphs">R28</text>
<text x="674.0" y="459.4" font-family="Liberation Sans" font-size="14.0" fill="#000000" text-anchor="start" textLength="23.2" lengthAdjust="spacingAndGlyphs">680</text>
<text x="743.8" y="380.8" font-family="Liberation Sans" font-size="14.0" fill="#000000" text-anchor="middle" textLength="24.3" lengthAdjust="spacingAndGlyphs">C13</text>
<text x="743.8" y="417.3" font-family="Liberation Sans" font-size="14.0" fill="#000000" text-anchor="middle" textLength="15.6" lengthAdjust="spacingAndGlyphs">1<tspan font-style="italic">μ</tspan></text>
<text x="69.4" y="616.0" font-family="Liberation Sans" font-size="14.0" fill="#000000" text-anchor="end" textLength="15.9" lengthAdjust="spacingAndGlyphs">V4</text>
<text x="67.2" y="598.2" font-family="Liberation Sans" font-size="14.0" fill="#000000" text-anchor="end" textLength="55.4" lengthAdjust="spacingAndGlyphs">AC 0.045</text>
<text x="53.1" y="549.3" font-family="Liberation Sans" font-size="14.0" fill="#000000" text-anchor="start" textLength="123.5" lengthAdjust="spacingAndGlyphs">SINE(0 0.045 1000)</text>
<text x="98.6" y="565.5" font-family="Liberation Sans" font-size="14.0" fill="#000000" text-anchor="start" textLength="48.3" lengthAdjust="spacingAndGlyphs">Rser=1k</text>
<text x="231.0" y="647.6" font-family="Liberation Sans" font-size="14.0" fill="#000000" text-anchor="start" textLength="24.3" lengthAdjust="spacingAndGlyphs">R24</text>
<text x="231.0" y="667.4" font-family="Liberation Sans" font-size="14.0" fill="#000000" text-anchor="start" textLength="23.2" lengthAdjust="spacingAndGlyphs">470</text>
<text x="278.4" y="647.6" font-family="Liberation Sans" font-size="14.0" fill="#000000" text-anchor="start" textLength="16.6" lengthAdjust="spacingAndGlyphs">C1</text>
<text x="278.4" y="674.7" font-family="Liberation Sans" font-size="14.0" fill="#000000" text-anchor="start" textLength="38.5" lengthAdjust="spacingAndGlyphs">220<tspan font-style="italic">μ</tspan>F</text>
<text x="242.1" y="543.6" font-family="Liberation Sans" font-size="14.0" fill="#000000" text-anchor="start" textLength="16.6" lengthAdjust="spacingAndGlyphs">U1</text>
<text x="224.6" y="616.1" font-family="Liberation Sans" font-size="14.0" fill="#000000" text-anchor="start" textLength="38.2" lengthAdjust="spacingAndGlyphs">6n23p</text>
<text x="712.4" y="620.5" font-family="Liberation Sans" font-size="14.0" fill="#000000" text-anchor="start" textLength="16.6" lengthAdjust="spacingAndGlyphs">C2</text>
<text x="712.4" y="647.6" font-family="Liberation Sans" font-size="14.0" fill="#000000" text-anchor="start" textLength="38.5" lengthAdjust="spacingAndGlyphs">220<tspan font-style="italic">μ</tspan>F</text>
<text x="307.3" y="254.1" font-family="Liberation Sans" font-size="14.0" fill="#0000FF" text-anchor="start" textLength="77.4" lengthAdjust="spacingAndGlyphs">269.44444V</text>
<text x="110.9" y="308.9" font-family="Liberation Sans" font-size="14.0" fill="#0000FF" text-anchor="middle" textLength="70.0" lengthAdjust="spacingAndGlyphs">76.14743V</text>
<text x="174.5" y="399.3" font-family="Liberation Sans" font-size="14.0" fill="#0000FF" text-anchor="start" textLength="78.0" lengthAdjust="spacingAndGlyphs">154.16342V</text>
<text x="790.7" y="254.1" font-family="Liberation Sans" font-size="14.0" fill="#0000FF" text-anchor="start" textLength="32.5" lengthAdjust="spacingAndGlyphs">280V</text>
<text x="562.5" y="589.2" font-family="Liberation Sans" font-size="14.0" fill="#0000FF" text-anchor="start" textLength="78.6" lengthAdjust="spacingAndGlyphs">4.0690484V</text>
<text x="0" y="4.8" transform="translate(249.1,274.3) rotate(-90)" font-family="Liberation Sans" font-size="14.0" fill="#0000FF" text-anchor="middle" textLength="87.2" lengthAdjust="spacingAndGlyphs">4.2073368mA</text>
<text x="311.0" y="624.0" font-family="Liberation Sans" font-size="14.0" fill="#0000FF" text-anchor="start" textLength="78.0" lengthAdjust="spacingAndGlyphs">1.9774472V</text>
<text x="0" y="4.8" transform="translate(231.7,509.8) rotate(-90)" font-family="Liberation Sans" font-size="14.0" fill="#0000FF" text-anchor="middle" textLength="76.0" lengthAdjust="spacingAndGlyphs">78.121368V</text>
<text x="176.8" y="801.2" font-family="Liberation Sans" font-size="14.0" fill="#000000" text-anchor="start" textLength="24.3" lengthAdjust="spacingAndGlyphs">R15</text>
<text x="176.8" y="821.0" font-family="Liberation Sans" font-size="14.0" fill="#000000" text-anchor="start" textLength="30.1" lengthAdjust="spacingAndGlyphs">470k</text>
<text x="176.8" y="864.5" font-family="Liberation Sans" font-size="14.0" fill="#000000" text-anchor="start" textLength="24.3" lengthAdjust="spacingAndGlyphs">R16</text>
<text x="176.8" y="884.3" font-family="Liberation Sans" font-size="14.0" fill="#000000" text-anchor="start" textLength="22.3" lengthAdjust="spacingAndGlyphs">56k</text>
<text x="267.2" y="846.4" font-family="Liberation Sans" font-size="14.0" fill="#000000" text-anchor="start" textLength="16.6" lengthAdjust="spacingAndGlyphs">R2</text>
<text x="267.2" y="866.2" font-family="Liberation Sans" font-size="14.0" fill="#000000" text-anchor="start" textLength="30.0" lengthAdjust="spacingAndGlyphs">27k4</text>
<text x="115.7" y="982.1" font-family="Liberation Sans" font-size="14.0" fill="#000000" text-anchor="start" textLength="16.6" lengthAdjust="spacingAndGlyphs">C3</text>
<text x="115.7" y="1009.2" font-family="Liberation Sans" font-size="14.0" fill="#000000" text-anchor="start" textLength="42.2" lengthAdjust="spacingAndGlyphs">0.47<tspan font-style="italic">μ</tspan>F</text>
<text x="196.9" y="959.4" font-family="Liberation Sans" font-size="14.0" fill="#000000" text-anchor="middle" textLength="16.6" lengthAdjust="spacingAndGlyphs">R4</text>
<text x="196.9" y="995.9" font-family="Liberation Sans" font-size="14.0" fill="#000000" text-anchor="middle" textLength="23.2" lengthAdjust="spacingAndGlyphs">100</text>
<text x="260.2" y="941.4" font-family="Liberation Sans" font-size="14.0" fill="#000000" text-anchor="start" textLength="16.6" lengthAdjust="spacingAndGlyphs">U6</text>
<text x="242.7" y="1013.9" font-family="Liberation Sans" font-size="14.0" fill="#000000" text-anchor="start" textLength="38.2" lengthAdjust="spacingAndGlyphs">6n23p</text>
<text x="149.6" y="1153.8" font-family="Liberation Sans" font-size="14.0" fill="#000000" text-anchor="start" textLength="16.6" lengthAdjust="spacingAndGlyphs">R3</text>
<text x="149.6" y="1173.6" font-family="Liberation Sans" font-size="14.0" fill="#000000" text-anchor="start" textLength="22.3" lengthAdjust="spacingAndGlyphs">47k</text>
<text x="178.8" y="1085.9" font-family="Liberation Sans" font-size="14.0" fill="#000000" text-anchor="middle" textLength="16.6" lengthAdjust="spacingAndGlyphs">R5</text>
<text x="178.8" y="1122.4" font-family="Liberation Sans" font-size="14.0" fill="#000000" text-anchor="middle" textLength="23.2" lengthAdjust="spacingAndGlyphs">100</text>
<text x="384.8" y="1072.8" font-family="Liberation Sans" font-size="14.0" fill="#000000" text-anchor="end" textLength="16.6" lengthAdjust="spacingAndGlyphs">C5</text>
<text x="385.9" y="1099.2" font-family="Liberation Sans" font-size="14.0" fill="#000000" text-anchor="end" textLength="30.6" lengthAdjust="spacingAndGlyphs">34n2</text>
<text x="433.3" y="1035.3" font-family="Liberation Sans" font-size="14.0" fill="#000000" text-anchor="end" textLength="16.6" lengthAdjust="spacingAndGlyphs">R7</text>
<text x="433.3" y="1055.3" font-family="Liberation Sans" font-size="14.0" fill="#000000" text-anchor="end" textLength="30.0" lengthAdjust="spacingAndGlyphs">3k18</text>
<text x="440.2" y="1108.1" font-family="Liberation Sans" font-size="14.0" fill="#000000" text-anchor="end" textLength="16.6" lengthAdjust="spacingAndGlyphs">C6</text>
<text x="436.3" y="1124.6" font-family="Liberation Sans" font-size="14.0" fill="#000000" text-anchor="end" textLength="26.9" lengthAdjust="spacingAndGlyphs">0.1<tspan font-style="italic">μ</tspan></text>
<text x="436.5" y="905.1" font-family="Liberation Sans" font-size="14.0" fill="#000000" text-anchor="middle" textLength="16.6" lengthAdjust="spacingAndGlyphs">C4</text>
<text x="436.5" y="941.6" font-family="Liberation Sans" font-size="14.0" fill="#000000" text-anchor="middle" textLength="26.9" lengthAdjust="spacingAndGlyphs">0.1<tspan font-style="italic">μ</tspan></text>
<text x="520.3" y="1135.7" font-family="Liberation Sans" font-size="14.0" fill="#000000" text-anchor="start" textLength="24.3" lengthAdjust="spacingAndGlyphs">R13</text>
<text x="520.3" y="1155.5" font-family="Liberation Sans" font-size="14.0" fill="#000000" text-anchor="start" textLength="33.1" lengthAdjust="spacingAndGlyphs">1Meg</text>
<text x="585.6" y="1040.7" font-family="Liberation Sans" font-size="14.0" fill="#000000" text-anchor="middle" textLength="24.3" lengthAdjust="spacingAndGlyphs">R10</text>
<text x="585.6" y="1077.2" font-family="Liberation Sans" font-size="14.0" fill="#000000" text-anchor="middle" textLength="14.6" lengthAdjust="spacingAndGlyphs">1k</text>
<text x="667.0" y="1022.7" font-family="Liberation Sans" font-size="14.0" fill="#000000" text-anchor="start" textLength="16.6" lengthAdjust="spacingAndGlyphs">U8</text>
<text x="649.5" y="1095.2" font-family="Liberation Sans" font-size="14.0" fill="#000000" text-anchor="start" textLength="38.2" lengthAdjust="spacingAndGlyphs">12au7</text>
<text x="655.9" y="1144.8" font-family="Liberation Sans" font-size="14.0" fill="#000000" text-anchor="start" textLength="24.3" lengthAdjust="spacingAndGlyphs">R11</text>
<text x="655.9" y="1164.6" font-family="Liberation Sans" font-size="14.0" fill="#000000" text-anchor="start" textLength="23.2" lengthAdjust="spacingAndGlyphs">680</text>
<text x="827.6" y="1153.8" font-family="Liberation Sans" font-size="14.0" fill="#000000" text-anchor="start" textLength="24.3" lengthAdjust="spacingAndGlyphs">R12</text>
<text x="827.6" y="1173.6" font-family="Liberation Sans" font-size="14.0" fill="#000000" text-anchor="start" textLength="22.3" lengthAdjust="spacingAndGlyphs">50k</text>
<text x="594.8" y="801.3" font-family="Liberation Sans" font-size="14.0" fill="#000000" text-anchor="start" textLength="16.6" lengthAdjust="spacingAndGlyphs">C8</text>
<text x="594.8" y="828.4" font-family="Liberation Sans" font-size="14.0" fill="#000000" text-anchor="start" textLength="30.8" lengthAdjust="spacingAndGlyphs">22<tspan font-style="italic">μ</tspan>F</text>
<text x="648.9" y="769.5" font-family="Liberation Sans" font-size="14.0" fill="#000000" text-anchor="middle" textLength="24.3" lengthAdjust="spacingAndGlyphs">R14</text>
<text x="648.9" y="806.0" font-family="Liberation Sans" font-size="14.0" fill="#000000" text-anchor="middle" textLength="22.2" lengthAdjust="spacingAndGlyphs">2k2</text>
<text x="712.2" y="769.5" font-family="Liberation Sans" font-size="14.0" fill="#000000" text-anchor="middle" textLength="24.3" lengthAdjust="spacingAndGlyphs">R17</text>
<text x="712.2" y="806.0" font-family="Liberation Sans" font-size="14.0" fill="#000000" text-anchor="middle">1</text>
<text x="756.0" y="796.3" font-family="Liberation Sans" font-size="14.0" fill="#000000" text-anchor="end" textLength="15.9" lengthAdjust="spacingAndGlyphs">V2</text>
<text x="757.1" y="842.7" font-family="Liberation Sans" font-size="14.0" fill="#000000" text-anchor="end" textLength="23.2" lengthAdjust="spacingAndGlyphs">280</text>
<text x="820.8" y="846.5" font-family="Liberation Sans" font-size="14.0" fill="#000000" text-anchor="start" textLength="24.3" lengthAdjust="spacingAndGlyphs">C16</text>
<text x="820.8" y="873.6" font-family="Liberation Sans" font-size="14.0" fill="#000000" text-anchor="start" textLength="30.8" lengthAdjust="spacingAndGlyphs">22<tspan font-style="italic">μ</tspan>F</text>
<text x="685.0" y="832.9" font-family="Liberation Sans" font-size="14.0" fill="#000000" text-anchor="start" textLength="16.6" lengthAdjust="spacingAndGlyphs">U7</text>
<text x="667.5" y="905.4" font-family="Liberation Sans" font-size="14.0" fill="#000000" text-anchor="start" textLength="38.2" lengthAdjust="spacingAndGlyphs">12au7</text>
<text x="610.7" y="936.8" font-family="Liberation Sans" font-size="14.0" fill="#000000" text-anchor="start" textLength="16.6" lengthAdjust="spacingAndGlyphs">R9</text>
<text x="610.7" y="956.6" font-family="Liberation Sans" font-size="14.0" fill="#000000" text-anchor="start" textLength="14.6" lengthAdjust="spacingAndGlyphs">1k</text>
<text x="674.0" y="964.0" font-family="Liberation Sans" font-size="14.0" fill="#000000" text-anchor="start" textLength="16.6" lengthAdjust="spacingAndGlyphs">R8</text>
<text x="674.0" y="983.8" font-family="Liberation Sans" font-size="14.0" fill="#000000" text-anchor="start" textLength="23.2" lengthAdjust="spacingAndGlyphs">680</text>
<text x="743.8" y="905.1" font-family="Liberation Sans" font-size="14.0" fill="#000000" text-anchor="middle" textLength="16.6" lengthAdjust="spacingAndGlyphs">C7</text>
<text x="743.8" y="941.6" font-family="Liberation Sans" font-size="14.0" fill="#000000" text-anchor="middle" textLength="15.6" lengthAdjust="spacingAndGlyphs">1<tspan font-style="italic">μ</tspan></text>
<text x="69.4" y="1140.4" font-family="Liberation Sans" font-size="14.0" fill="#000000" text-anchor="end" textLength="15.9" lengthAdjust="spacingAndGlyphs">V3</text>
<text x="67.2" y="1122.6" font-family="Liberation Sans" font-size="14.0" fill="#000000" text-anchor="end" textLength="55.4" lengthAdjust="spacingAndGlyphs">AC 0.045</text>
<text x="53.1" y="1073.7" font-family="Liberation Sans" font-size="14.0" fill="#000000" text-anchor="start" textLength="123.5" lengthAdjust="spacingAndGlyphs">SINE(0 0.045 1000)</text>
<text x="98.6" y="1089.9" font-family="Liberation Sans" font-size="14.0" fill="#000000" text-anchor="start" textLength="48.3" lengthAdjust="spacingAndGlyphs">Rser=1k</text>
<text x="249.1" y="1171.9" font-family="Liberation Sans" font-size="14.0" fill="#000000" text-anchor="start" textLength="16.6" lengthAdjust="spacingAndGlyphs">R6</text>
<text x="249.1" y="1191.7" font-family="Liberation Sans" font-size="14.0" fill="#000000" text-anchor="start" textLength="15.4" lengthAdjust="spacingAndGlyphs">54</text>
<text x="241.7" y="1086.1" font-family="Liberation Sans" font-size="14.0" fill="#000000" text-anchor="start" textLength="13.9" lengthAdjust="spacingAndGlyphs">J1</text>
<text x="241.7" y="1108.8" font-family="Liberation Sans" font-size="14.0" fill="#000000" text-anchor="start" textLength="54.7" lengthAdjust="spacingAndGlyphs">LSK170B</text>
<text x="307.3" y="778.4" font-family="Liberation Sans" font-size="14.0" fill="#0000FF" text-anchor="start" textLength="77.4" lengthAdjust="spacingAndGlyphs">270.43839V</text>
<text x="110.9" y="833.2" font-family="Liberation Sans" font-size="14.0" fill="#0000FF" text-anchor="middle" textLength="78.0" lengthAdjust="spacingAndGlyphs">28.791969V</text>
<text x="174.5" y="923.6" font-family="Liberation Sans" font-size="14.0" fill="#0000FF" text-anchor="start" textLength="78.0" lengthAdjust="spacingAndGlyphs">165.56877V</text>
<text x="790.7" y="778.4" font-family="Liberation Sans" font-size="14.0" fill="#0000FF" text-anchor="start" textLength="32.5" lengthAdjust="spacingAndGlyphs">280V</text>
<text x="562.5" y="1113.5" font-family="Liberation Sans" font-size="14.0" fill="#0000FF" text-anchor="start" textLength="78.6" lengthAdjust="spacingAndGlyphs">4.0690556V</text>
<text x="0" y="4.8" transform="translate(249.1,798.6) rotate(-90)" font-family="Liberation Sans" font-size="14.0" fill="#0000FF" text-anchor="middle" textLength="87.2" lengthAdjust="spacingAndGlyphs">4.2073368mA</text>
<text x="60.1" y="579.1" font-family="Liberation Sans" font-size="14.0" fill="#000000" text-anchor="middle" textLength="18.7" lengthAdjust="spacingAndGlyphs">In1</text>
<text x="64.0" y="1103.4" font-family="Liberation Sans" font-size="14.0" fill="#000000" text-anchor="middle" textLength="11.0" lengthAdjust="spacingAndGlyphs">In</text>
<text x="845.0" y="398.3" font-family="Liberation Sans" font-size="14.0" fill="#000000" text-anchor="middle" textLength="28.7" lengthAdjust="spacingAndGlyphs">Out1</text>
<text x="841.0" y="922.6" font-family="Liberation Sans" font-size="14.0" fill="#000000" text-anchor="middle" textLength="20.9" lengthAdjust="spacingAndGlyphs">Out</text>
<text x="884.6" y="263.4" font-family="Liberation Sans" font-size="14.0" fill="#000000" text-anchor="start" textLength="135.5" lengthAdjust="spacingAndGlyphs">.ac oct 100 10 20000</text>
<text x="879.9" y="295.0" font-family="Liberation Sans" font-size="14.0" fill="#000000" text-anchor="start" textLength="317.1" lengthAdjust="spacingAndGlyphs">.SUBCKT&#160;6N23P&#160;&#160;1&#160;2&#160;3&#160;;&#160;P&#160;G&#160;C&#160;(Triode)&#160;26-Oct-2001</text>
<text x="879.9" y="307.4" font-family="Liberation Sans" font-size="14.0" fill="#000000" text-anchor="start" textLength="385.1" lengthAdjust="spacingAndGlyphs">X1&#160;1&#160;2&#160;3&#160;Triodo&#160;MU=33.04&#160;&#160;EX=1.220&#160;&#160;KG1=212.4&#160;&#160;KP=183.83</text>
<text x="879.9" y="319.9" font-family="Liberation Sans" font-size="14.0" fill="#000000" text-anchor="start">+</text>
<text x="879.9" y="332.3" font-family="Liberation Sans" font-size="14.0" fill="#000000" text-anchor="start" textLength="35.3" lengthAdjust="spacingAndGlyphs">.ENDS</text>
<text x="879.9" y="344.7" font-family="Liberation Sans" font-size="14.0" fill="#000000" text-anchor="start" textLength="169.7" lengthAdjust="spacingAndGlyphs">.Subckt Triodo 1 2 3 ; A G K</text>
<text x="879.9" y="357.1" font-family="Liberation Sans" font-size="14.0" fill="#000000" text-anchor="start" textLength="92.3" lengthAdjust="spacingAndGlyphs">E1 7 0 VALUE=</text>
<text x="879.9" y="369.5" font-family="Liberation Sans" font-size="14.0" fill="#000000" text-anchor="start" textLength="457.7" lengthAdjust="spacingAndGlyphs">+{V(1,3)/KP*LOG(1+EXP(KP*(1/MU+V(2,3)/SQRT(KVB+V(1,3)*V(1,3)))))}</text>
<text x="879.9" y="382.0" font-family="Liberation Sans" font-size="14.0" fill="#000000" text-anchor="start" textLength="67.5" lengthAdjust="spacingAndGlyphs">RE1 7 0 1G</text>
<text x="879.9" y="394.4" font-family="Liberation Sans" font-size="14.0" fill="#000000" text-anchor="start" textLength="332.3" lengthAdjust="spacingAndGlyphs">G1 1 3 VALUE={(PWR(V(7),EX)+PWRS(V(7),EX))/KG1}</text>
<text x="879.9" y="406.8" font-family="Liberation Sans" font-size="14.0" fill="#000000" text-anchor="start" textLength="371.9" lengthAdjust="spacingAndGlyphs">RCP&#160;1&#160;3&#160;1G&#160;&#160;&#160;&#160;;&#160;TO&#160;AVOID&#160;FLOATING&#160;NODES&#160;IN&#160;MU-FOLLOWER</text>
<text x="879.9" y="419.2" font-family="Liberation Sans" font-size="14.0" fill="#000000" text-anchor="start" textLength="187.6" lengthAdjust="spacingAndGlyphs">C1&#160;2&#160;3&#160;{CCG}&#160;&#160;;&#160;CATHODE-GRID</text>
<text x="879.9" y="431.6" font-family="Liberation Sans" font-size="14.0" fill="#000000" text-anchor="start" textLength="166.5" lengthAdjust="spacingAndGlyphs">C2&#160;2&#160;1&#160;{CGP}&#160;&#160;;&#160;GRID-PLATE</text>
<text x="879.9" y="444.1" font-family="Liberation Sans" font-size="14.0" fill="#000000" text-anchor="start" textLength="197.5" lengthAdjust="spacingAndGlyphs">C3&#160;1&#160;3&#160;{CCP}&#160;&#160;;&#160;CATHODE-PLATE</text>
<text x="879.9" y="456.5" font-family="Liberation Sans" font-size="14.0" fill="#000000" text-anchor="start" textLength="204.9" lengthAdjust="spacingAndGlyphs">D3&#160;5&#160;3&#160;DX&#160;&#160;&#160;&#160;&#160;;&#160;FOR&#160;GRID&#160;CURRENT</text>
<text x="879.9" y="468.9" font-family="Liberation Sans" font-size="14.0" fill="#000000" text-anchor="start" textLength="205.6" lengthAdjust="spacingAndGlyphs">R1&#160;2&#160;5&#160;{RGI}&#160;&#160;;&#160;FOR&#160;GRID&#160;CURRENT</text>
<text x="879.9" y="481.3" font-family="Liberation Sans" font-size="14.0" fill="#000000" text-anchor="start" textLength="273.0" lengthAdjust="spacingAndGlyphs">.MODEL DX D(IS=1N RS=1 CJO=10PF TT=1N)</text>
<text x="879.9" y="493.7" font-family="Liberation Sans" font-size="14.0" fill="#000000" text-anchor="start" textLength="35.3" lengthAdjust="spacingAndGlyphs">.ENDS</text>
<text x="879.9" y="506.2" font-family="Liberation Sans" font-size="14.0" fill="#000000" text-anchor="start" textLength="264.4" lengthAdjust="spacingAndGlyphs">.SUBCKT&#160;12AU7&#160;1&#160;2&#160;3&#160;&#160;;&#160;P&#160;G&#160;C;&#160;NEW&#160;MODEL</text>
<text x="879.9" y="518.6" font-family="Liberation Sans" font-size="14.0" fill="#000000" text-anchor="start" textLength="442.9" lengthAdjust="spacingAndGlyphs">X1 1 2 3 Triodo MU=21.5 EX=1.3 KG1=1180 KP=84 KVB=300 RGI=2000</text>
<text x="879.9" y="531.0" font-family="Liberation Sans" font-size="14.0" fill="#000000" text-anchor="start">+</text>
<text x="879.9" y="543.4" font-family="Liberation Sans" font-size="14.0" fill="#000000" text-anchor="start" textLength="35.3" lengthAdjust="spacingAndGlyphs">.ENDS</text>
<text x="950.5" y="319.8" font-family="Liberation Sans" font-size="14.0" fill="#000000" text-anchor="start" textLength="388.4" lengthAdjust="spacingAndGlyphs">KVB=300.0&#160;&#160;VCT=0.00&#160;RGI=2000&#160;CCG=3.6P&#160;&#160;CGP=1.5P&#160;CCP=2P</text>
<text x="950.5" y="531.0" font-family="Liberation Sans" font-size="14.0" fill="#000000" text-anchor="start" textLength="481.5" lengthAdjust="spacingAndGlyphs">CCG=2.3P&#160;&#160;CGP=2.2P&#160;CCP=1.0P&#160;&#160;;&#160;ADD&#160;.7PF&#160;TO&#160;ADJACENT&#160;PINS;&#160;.5&#160;TO&#160;OTHERS.</text>
<text x="880.1" y="629.5" font-family="Liberation Sans" font-size="14.0" fill="#000000" text-anchor="start" textLength="94.6" lengthAdjust="spacingAndGlyphs">.four&#160;1k&#160;&#160;V(out)</text>
<text x="880.1" y="641.9" font-family="Liberation Sans" font-size="14.0" fill="#000000" text-anchor="start" textLength="171.7" lengthAdjust="spacingAndGlyphs">.meas tran MOut max V(out)</text>
<text x="880.1" y="654.3" font-family="Liberation Sans" font-size="14.0" fill="#000000" text-anchor="start" textLength="149.8" lengthAdjust="spacingAndGlyphs">.meas tran MIn max V(in)</text>
<text x="880.1" y="666.7" font-family="Liberation Sans" font-size="14.0" fill="#000000" text-anchor="start" textLength="250.5" lengthAdjust="spacingAndGlyphs">.meas tran KL AVG 20*LOG10(MOut/MIn)</text>
<text x="880.1" y="679.0" font-family="Liberation Sans" font-size="14.0" fill="#000000" text-anchor="start" textLength="149.8" lengthAdjust="spacingAndGlyphs">.meas tran IC max -Is(J2)</text>
<text x="880.1" y="691.4" font-family="Liberation Sans" font-size="14.0" fill="#000000" text-anchor="start" textLength="145.3" lengthAdjust="spacingAndGlyphs">.meas tran IP max Id(J1)</text>
<text x="880.1" y="703.8" font-family="Liberation Sans" font-size="14.0" fill="#000000" text-anchor="start" textLength="148.6" lengthAdjust="spacingAndGlyphs">.meas tran Itol AVG IC/IP</text>
<text x="880.1" y="716.2" font-family="Liberation Sans" font-size="14.0" fill="#000000" text-anchor="start" textLength="195.9" lengthAdjust="spacingAndGlyphs">.meas tran GAIN AVG(MOut/MIn)</text>
<rect x="1440" y="0" width="1440" height="1444" fill="#000"/>
<rect x="1507" y="32" width="1295" height="2" fill="#BDBDBD"/>
<rect x="1526" y="33" width="3" height="1372" fill="#BDBDBD"/>
<rect x="2780" y="33" width="3" height="1372" fill="#BDBDBD"/>
<rect x="1526" y="1403" width="1257" height="2" fill="#BDBDBD"/>
<rect x="1507" y="32.0" width="20" height="2" fill="#BDBDBD"/>
<text x="1507.0" y="0" transform="translate(0,44.8) scale(1,1.080)" font-family="Liberation Mono" font-size="27.6" fill="#A8A8A8" text-anchor="end">40dB</text><rect x="1463.1" y="32.5" width="5" height="5" fill="#000"/><line x1="1462.6" y1="38.3" x2="1468.6" y2="29.0" stroke="#A8A8A8" stroke-width="2"/>
<rect x="1507" y="156.6" width="20" height="2" fill="#BDBDBD"/>
<text x="1507.0" y="0" transform="translate(0,169.4) scale(1,1.080)" font-family="Liberation Mono" font-size="27.6" fill="#A8A8A8" text-anchor="end">36dB</text>
<rect x="1507" y="281.2" width="20" height="2" fill="#BDBDBD"/>
<text x="1507.0" y="0" transform="translate(0,294.0) scale(1,1.080)" font-family="Liberation Mono" font-size="27.6" fill="#A8A8A8" text-anchor="end">32dB</text>
<rect x="1507" y="405.9" width="20" height="2" fill="#BDBDBD"/>
<text x="1507.0" y="0" transform="translate(0,418.7) scale(1,1.080)" font-family="Liberation Mono" font-size="27.6" fill="#A8A8A8" text-anchor="end">28dB</text>
<rect x="1507" y="530.5" width="20" height="2" fill="#BDBDBD"/>
<text x="1507.0" y="0" transform="translate(0,543.3) scale(1,1.080)" font-family="Liberation Mono" font-size="27.6" fill="#A8A8A8" text-anchor="end">24dB</text>
<rect x="1507" y="655.1" width="20" height="2" fill="#BDBDBD"/>
<text x="1507.0" y="0" transform="translate(0,667.9) scale(1,1.080)" font-family="Liberation Mono" font-size="27.6" fill="#A8A8A8" text-anchor="end">20dB</text><rect x="1463.1" y="655.6" width="5" height="5" fill="#000"/><line x1="1462.6" y1="661.4" x2="1468.6" y2="652.1" stroke="#A8A8A8" stroke-width="2"/>
<rect x="1507" y="779.7" width="20" height="2" fill="#BDBDBD"/>
<text x="1507.0" y="0" transform="translate(0,792.5) scale(1,1.080)" font-family="Liberation Mono" font-size="27.6" fill="#A8A8A8" text-anchor="end">16dB</text>
<rect x="1507" y="904.3" width="20" height="2" fill="#BDBDBD"/>
<text x="1507.0" y="0" transform="translate(0,917.1) scale(1,1.080)" font-family="Liberation Mono" font-size="27.6" fill="#A8A8A8" text-anchor="end">12dB</text>
<rect x="1507" y="1029.0" width="20" height="2" fill="#BDBDBD"/>
<text x="1507.0" y="0" transform="translate(0,1041.8) scale(1,1.080)" font-family="Liberation Mono" font-size="27.6" fill="#A8A8A8" text-anchor="end">8dB</text>
<rect x="1507" y="1153.6" width="20" height="2" fill="#BDBDBD"/>
<text x="1507.0" y="0" transform="translate(0,1166.4) scale(1,1.080)" font-family="Liberation Mono" font-size="27.6" fill="#A8A8A8" text-anchor="end">4dB</text>
<rect x="1507" y="1278.2" width="20" height="2" fill="#BDBDBD"/>
<text x="1507.0" y="0" transform="translate(0,1291.0) scale(1,1.080)" font-family="Liberation Mono" font-size="27.6" fill="#A8A8A8" text-anchor="end">0dB</text><rect x="1463.1" y="1278.7" width="5" height="5" fill="#000"/><line x1="1462.6" y1="1284.5" x2="1468.6" y2="1275.2" stroke="#A8A8A8" stroke-width="2"/>
<rect x="2782" y="32.0" width="20" height="2" fill="#BDBDBD"/>
<text x="2872.0" y="0" transform="translate(0,44.8) scale(1,1.080)" font-family="Liberation Mono" font-size="27.6" fill="#A8A8A8" text-anchor="end">40°</text><rect x="2844.7" y="32.5" width="5" height="5" fill="#000"/><line x1="2844.2" y1="38.3" x2="2850.2" y2="29.0" stroke="#A8A8A8" stroke-width="2"/>
<rect x="2782" y="137.5" width="20" height="2" fill="#BDBDBD"/>
<text x="2872.0" y="0" transform="translate(0,150.3) scale(1,1.080)" font-family="Liberation Mono" font-size="27.6" fill="#A8A8A8" text-anchor="end">30°</text><rect x="2844.7" y="138.0" width="5" height="5" fill="#000"/><line x1="2844.2" y1="143.8" x2="2850.2" y2="134.5" stroke="#A8A8A8" stroke-width="2"/>
<rect x="2782" y="242.9" width="20" height="2" fill="#BDBDBD"/>
<text x="2872.0" y="0" transform="translate(0,255.7) scale(1,1.080)" font-family="Liberation Mono" font-size="27.6" fill="#A8A8A8" text-anchor="end">20°</text><rect x="2844.7" y="243.4" width="5" height="5" fill="#000"/><line x1="2844.2" y1="249.2" x2="2850.2" y2="239.9" stroke="#A8A8A8" stroke-width="2"/>
<rect x="2782" y="348.4" width="20" height="2" fill="#BDBDBD"/>
<text x="2872.0" y="0" transform="translate(0,361.2) scale(1,1.080)" font-family="Liberation Mono" font-size="27.6" fill="#A8A8A8" text-anchor="end">10°</text><rect x="2844.7" y="348.9" width="5" height="5" fill="#000"/><line x1="2844.2" y1="354.7" x2="2850.2" y2="345.4" stroke="#A8A8A8" stroke-width="2"/>
<rect x="2782" y="453.8" width="20" height="2" fill="#BDBDBD"/>
<text x="2872.0" y="0" transform="translate(0,466.6) scale(1,1.080)" font-family="Liberation Mono" font-size="27.6" fill="#A8A8A8" text-anchor="end">0°</text><rect x="2844.7" y="454.3" width="5" height="5" fill="#000"/><line x1="2844.2" y1="460.1" x2="2850.2" y2="450.8" stroke="#A8A8A8" stroke-width="2"/>
<rect x="2782" y="559.3" width="20" height="2" fill="#BDBDBD"/>
<text x="2872.0" y="0" transform="translate(0,572.1) scale(1,1.080)" font-family="Liberation Mono" font-size="27.6" fill="#A8A8A8" text-anchor="end">−10°</text><rect x="2844.7" y="559.8" width="5" height="5" fill="#000"/><line x1="2844.2" y1="565.6" x2="2850.2" y2="556.3" stroke="#A8A8A8" stroke-width="2"/>
<rect x="2782" y="664.8" width="20" height="2" fill="#BDBDBD"/>
<text x="2872.0" y="0" transform="translate(0,677.6) scale(1,1.080)" font-family="Liberation Mono" font-size="27.6" fill="#A8A8A8" text-anchor="end">−20°</text><rect x="2844.7" y="665.3" width="5" height="5" fill="#000"/><line x1="2844.2" y1="671.1" x2="2850.2" y2="661.8" stroke="#A8A8A8" stroke-width="2"/>
<rect x="2782" y="770.2" width="20" height="2" fill="#BDBDBD"/>
<text x="2872.0" y="0" transform="translate(0,783.0) scale(1,1.080)" font-family="Liberation Mono" font-size="27.6" fill="#A8A8A8" text-anchor="end">−30°</text><rect x="2844.7" y="770.7" width="5" height="5" fill="#000"/><line x1="2844.2" y1="776.5" x2="2850.2" y2="767.2" stroke="#A8A8A8" stroke-width="2"/>
<rect x="2782" y="875.7" width="20" height="2" fill="#BDBDBD"/>
<text x="2872.0" y="0" transform="translate(0,888.5) scale(1,1.080)" font-family="Liberation Mono" font-size="27.6" fill="#A8A8A8" text-anchor="end">−40°</text><rect x="2844.7" y="876.2" width="5" height="5" fill="#000"/><line x1="2844.2" y1="882.0" x2="2850.2" y2="872.7" stroke="#A8A8A8" stroke-width="2"/>
<rect x="2782" y="981.1" width="20" height="2" fill="#BDBDBD"/>
<text x="2872.0" y="0" transform="translate(0,993.9) scale(1,1.080)" font-family="Liberation Mono" font-size="27.6" fill="#A8A8A8" text-anchor="end">−50°</text><rect x="2844.7" y="981.6" width="5" height="5" fill="#000"/><line x1="2844.2" y1="987.4" x2="2850.2" y2="978.1" stroke="#A8A8A8" stroke-width="2"/>
<rect x="2782" y="1086.6" width="20" height="2" fill="#BDBDBD"/>
<text x="2872.0" y="0" transform="translate(0,1099.4) scale(1,1.080)" font-family="Liberation Mono" font-size="27.6" fill="#A8A8A8" text-anchor="end">−60°</text><rect x="2844.7" y="1087.1" width="5" height="5" fill="#000"/><line x1="2844.2" y1="1092.9" x2="2850.2" y2="1083.6" stroke="#A8A8A8" stroke-width="2"/>
<rect x="2782" y="1192.1" width="20" height="2" fill="#BDBDBD"/>
<text x="2872.0" y="0" transform="translate(0,1204.9) scale(1,1.080)" font-family="Liberation Mono" font-size="27.6" fill="#A8A8A8" text-anchor="end">−70°</text><rect x="2844.7" y="1192.6" width="5" height="5" fill="#000"/><line x1="2844.2" y1="1198.4" x2="2850.2" y2="1189.1" stroke="#A8A8A8" stroke-width="2"/>
<rect x="2782" y="1297.5" width="20" height="2" fill="#BDBDBD"/>
<text x="2872.0" y="0" transform="translate(0,1310.3) scale(1,1.080)" font-family="Liberation Mono" font-size="27.6" fill="#A8A8A8" text-anchor="end">−80°</text><rect x="2844.7" y="1298.0" width="5" height="5" fill="#000"/><line x1="2844.2" y1="1303.8" x2="2850.2" y2="1294.5" stroke="#A8A8A8" stroke-width="2"/>
<rect x="2782" y="1403.0" width="20" height="2" fill="#BDBDBD"/>
<text x="2872.0" y="0" transform="translate(0,1415.8) scale(1,1.080)" font-family="Liberation Mono" font-size="27.6" fill="#A8A8A8" text-anchor="end">−90°</text><rect x="2844.7" y="1403.5" width="5" height="5" fill="#000"/><line x1="2844.2" y1="1409.3" x2="2850.2" y2="1400.0" stroke="#A8A8A8" stroke-width="2"/>
<rect x="1526.0" y="1404" width="3" height="20" fill="#BDBDBD"/>
<rect x="1640.4" y="1404" width="3" height="10" fill="#BDBDBD"/>
<rect x="1707.2" y="1404" width="3" height="10" fill="#BDBDBD"/>
<rect x="1754.7" y="1404" width="3" height="10" fill="#BDBDBD"/>
<rect x="1791.5" y="1404" width="3" height="10" fill="#BDBDBD"/>
<rect x="1821.6" y="1404" width="3" height="10" fill="#BDBDBD"/>
<rect x="1847.0" y="1404" width="3" height="10" fill="#BDBDBD"/>
<rect x="1869.1" y="1404" width="3" height="10" fill="#BDBDBD"/>
<rect x="1888.5" y="1404" width="3" height="10" fill="#BDBDBD"/>
<rect x="1905.9" y="1404" width="3" height="20" fill="#BDBDBD"/>
<rect x="2020.2" y="1404" width="3" height="10" fill="#BDBDBD"/>
<rect x="2087.1" y="1404" width="3" height="10" fill="#BDBDBD"/>
<rect x="2134.6" y="1404" width="3" height="10" fill="#BDBDBD"/>
<rect x="2171.4" y="1404" width="3" height="10" fill="#BDBDBD"/>
<rect x="2201.5" y="1404" width="3" height="10" fill="#BDBDBD"/>
<rect x="2226.9" y="1404" width="3" height="10" fill="#BDBDBD"/>
<rect x="2248.9" y="1404" width="3" height="10" fill="#BDBDBD"/>
<rect x="2268.4" y="1404" width="3" height="10" fill="#BDBDBD"/>
<rect x="2285.8" y="1404" width="3" height="20" fill="#BDBDBD"/>
<rect x="2400.1" y="1404" width="3" height="10" fill="#BDBDBD"/>
<rect x="2467.0" y="1404" width="3" height="10" fill="#BDBDBD"/>
<rect x="2514.5" y="1404" width="3" height="10" fill="#BDBDBD"/>
<rect x="2551.3" y="1404" width="3" height="10" fill="#BDBDBD"/>
<rect x="2581.4" y="1404" width="3" height="10" fill="#BDBDBD"/>
<rect x="2606.8" y="1404" width="3" height="10" fill="#BDBDBD"/>
<rect x="2628.8" y="1404" width="3" height="10" fill="#BDBDBD"/>
<rect x="2648.3" y="1404" width="3" height="10" fill="#BDBDBD"/>
<rect x="2665.6" y="1404" width="3" height="20" fill="#BDBDBD"/>
<rect x="2780.0" y="1404" width="3" height="10" fill="#BDBDBD"/>
<text x="1527.5" y="0" transform="translate(0,1455.0) scale(1,1.080)" font-family="Liberation Mono" font-size="27.6" fill="#A8A8A8" text-anchor="middle">10Hz</text><rect x="1516.7" y="1442.7" width="5" height="5" fill="#000"/><line x1="1516.2" y1="1448.5" x2="1522.2" y2="1439.2" stroke="#A8A8A8" stroke-width="2"/>
<text x="1907.4" y="0" transform="translate(0,1455.0) scale(1,1.080)" font-family="Liberation Mono" font-size="27.6" fill="#A8A8A8" text-anchor="middle">100Hz</text><rect x="1888.3" y="1442.7" width="5" height="5" fill="#000"/><line x1="1887.8" y1="1448.5" x2="1893.8" y2="1439.2" stroke="#A8A8A8" stroke-width="2"/><rect x="1904.9" y="1442.7" width="5" height="5" fill="#000"/><line x1="1904.4" y1="1448.5" x2="1910.4" y2="1439.2" stroke="#A8A8A8" stroke-width="2"/>
<text x="2287.3" y="0" transform="translate(0,1455.0) scale(1,1.080)" font-family="Liberation Mono" font-size="27.6" fill="#A8A8A8" text-anchor="middle">1KHz</text>
<text x="2667.1" y="0" transform="translate(0,1455.0) scale(1,1.080)" font-family="Liberation Mono" font-size="27.6" fill="#A8A8A8" text-anchor="middle">10KHz</text><rect x="2648.1" y="1442.7" width="5" height="5" fill="#000"/><line x1="2647.6" y1="1448.5" x2="2653.6" y2="1439.2" stroke="#A8A8A8" stroke-width="2"/>
<text x="1839.9" y="0" transform="translate(0,25.8) scale(1,1.080)" font-family="Liberation Mono" font-size="27.6" fill="#F23C28" text-anchor="middle">V(out1)</text>
<text x="2465.4" y="0" transform="translate(0,25.8) scale(1,1.080)" font-family="Liberation Mono" font-size="27.6" fill="#78FF50" text-anchor="middle">V(out)</text>
<clipPath id="pc"><rect x="1527" y="34" width="1255" height="1370"/></clipPath>
<g clip-path="url(#pc)" fill="none" stroke-width="3" stroke-linejoin="round">
<path d="M1528.2,338.6 L1530.2,343.4 L1532.2,348.3 L1534.2,353.0 L1536.2,357.8 L1538.2,362.5 L1540.2,367.1 L1542.2,371.7 L1544.2,376.3 L1546.2,380.8 L1548.2,385.3 L1550.2,389.7 L1552.2,394.1 L1554.2,398.5 L1556.2,402.8 L1558.2,407.2 L1560.2,411.4 L1562.2,415.7 L1564.2,419.9 L1566.2,424.1 L1568.2,428.3 L1570.2,432.4 L1572.2,436.5 L1574.2,440.6 L1576.2,444.7 L1578.2,448.8 L1580.2,452.8 L1582.2,456.9 L1584.2,460.9 L1586.2,464.9 L1588.2,468.9 L1590.2,472.9 L1592.2,476.9 L1594.2,480.8 L1596.2,484.8 L1598.2,488.8 L1600.2,492.7 L1602.2,496.7 L1604.2,500.6 L1606.2,504.6 L1608.2,508.5 L1610.2,512.5 L1612.2,516.4 L1614.2,520.4 L1616.2,524.4 L1618.2,528.4 L1620.2,532.4 L1622.2,536.4 L1624.2,540.4 L1626.2,544.5 L1628.2,548.5 L1630.2,552.6 L1632.2,556.6 L1634.2,560.7 L1636.2,564.8 L1638.2,568.9 L1640.2,573.1 L1642.2,577.2 L1644.2,581.3 L1646.2,585.5 L1648.2,589.6 L1650.2,593.8 L1652.2,598.0 L1654.2,602.1 L1656.2,606.3 L1658.2,610.5 L1660.2,614.7 L1662.2,618.9 L1664.2,623.1 L1666.2,627.3 L1668.2,631.6 L1670.2,635.8 L1672.2,640.0 L1674.2,644.2 L1676.2,648.5 L1678.2,652.7 L1680.2,656.9 L1682.2,661.2 L1684.2,665.4 L1686.2,669.6 L1688.2,673.9 L1690.2,678.1 L1692.2,682.3 L1694.2,686.6 L1696.2,690.8 L1698.2,695.0 L1700.2,699.2 L1702.2,703.5 L1704.2,707.7 L1706.2,711.9 L1708.2,716.1 L1710.2,720.3 L1712.2,724.5 L1714.2,728.7 L1716.2,732.9 L1718.2,737.1 L1720.2,741.3 L1722.2,745.5 L1724.2,749.7 L1726.2,753.9 L1728.2,758.1 L1730.2,762.3 L1732.2,766.4 L1734.2,770.6 L1736.2,774.8 L1738.2,779.0 L1740.2,783.1 L1742.2,787.3 L1744.2,791.4 L1746.2,795.5 L1748.2,799.6 L1750.2,803.7 L1752.2,807.8 L1754.2,811.8 L1756.2,815.8 L1758.2,819.8 L1760.2,823.8 L1762.2,827.7 L1764.2,831.6 L1766.2,835.5 L1768.2,839.4 L1770.2,843.2 L1772.2,847.1 L1774.2,850.9 L1776.2,854.6 L1778.2,858.4 L1780.2,862.1 L1782.2,865.8 L1784.2,869.5 L1786.2,873.2 L1788.2,876.8 L1790.2,880.4 L1792.2,884.0 L1794.2,887.6 L1796.2,891.1 L1798.2,894.6 L1800.2,898.1 L1802.2,901.6 L1804.2,905.0 L1806.2,908.5 L1808.2,911.9 L1810.2,915.2 L1812.2,918.6 L1814.2,921.9 L1816.2,925.2 L1818.2,928.5 L1820.2,931.7 L1822.2,934.9 L1824.2,938.1 L1826.2,941.3 L1828.2,944.5 L1830.2,947.6 L1832.2,950.7 L1834.2,953.8 L1836.2,956.8 L1838.2,959.8 L1840.2,962.8 L1842.2,965.8 L1844.2,968.7 L1846.2,971.6 L1848.2,974.5 L1850.2,977.4 L1852.2,980.2 L1854.2,983.0 L1856.2,985.7 L1858.2,988.5 L1860.2,991.2 L1862.2,993.9 L1864.2,996.5 L1866.2,999.1 L1868.2,1001.7 L1870.2,1004.3 L1872.2,1006.8 L1874.2,1009.3 L1876.2,1011.8 L1878.2,1014.2 L1880.2,1016.6 L1882.2,1019.0 L1884.2,1021.3 L1886.2,1023.6 L1888.2,1025.9 L1890.2,1028.1 L1892.2,1030.3 L1894.2,1032.5 L1896.2,1034.6 L1898.2,1036.7 L1900.2,1038.8 L1902.2,1040.8 L1904.2,1042.8 L1906.2,1044.8 L1908.2,1046.7 L1910.2,1048.6 L1912.2,1050.5 L1914.2,1052.3 L1916.2,1054.1 L1918.2,1055.8 L1920.2,1057.5 L1922.2,1059.2 L1924.2,1060.8 L1926.2,1062.4 L1928.2,1064.0 L1930.2,1065.5 L1932.2,1067.0 L1934.2,1068.4 L1936.2,1069.9 L1938.2,1071.2 L1940.2,1072.5 L1942.2,1073.8 L1944.2,1075.1 L1946.2,1076.3 L1948.2,1077.5 L1950.2,1078.6 L1952.2,1079.7 L1954.2,1080.7 L1956.2,1081.7 L1958.2,1082.7 L1960.2,1083.6 L1962.2,1084.5 L1964.2,1085.3 L1966.2,1086.1 L1968.2,1086.9 L1970.2,1087.6 L1972.2,1088.3 L1974.2,1088.9 L1976.2,1089.5 L1978.2,1090.0 L1980.2,1090.6 L1982.2,1091.0 L1984.2,1091.5 L1986.2,1091.9 L1988.2,1092.2 L1990.2,1092.5 L1992.2,1092.8 L1994.2,1093.1 L1996.2,1093.3 L1998.2,1093.4 L2000.2,1093.6 L2002.2,1093.7 L2004.2,1093.7 L2006.2,1093.8 L2008.2,1093.8 L2010.2,1093.7 L2012.2,1093.7 L2014.2,1093.6 L2016.2,1093.4 L2018.2,1093.3 L2020.2,1093.1 L2022.2,1092.9 L2024.2,1092.6 L2026.2,1092.3 L2028.2,1092.0 L2030.2,1091.6 L2032.2,1091.3 L2034.2,1090.8 L2036.2,1090.4 L2038.2,1089.9 L2040.2,1089.5 L2042.2,1088.9 L2044.2,1088.4 L2046.2,1087.8 L2048.2,1087.2 L2050.2,1086.6 L2052.2,1085.9 L2054.2,1085.3 L2056.2,1084.6 L2058.2,1083.8 L2060.2,1083.1 L2062.2,1082.3 L2064.2,1081.5 L2066.2,1080.7 L2068.2,1079.8 L2070.2,1079.0 L2072.2,1078.1 L2074.2,1077.2 L2076.2,1076.3 L2078.2,1075.3 L2080.2,1074.3 L2082.2,1073.4 L2084.2,1072.4 L2086.2,1071.3 L2088.2,1070.3 L2090.2,1069.2 L2092.2,1068.1 L2094.2,1067.0 L2096.2,1065.9 L2098.2,1064.8 L2100.2,1063.6 L2102.2,1062.5 L2104.2,1061.3 L2106.2,1060.1 L2108.2,1058.9 L2110.2,1057.7 L2112.2,1056.4 L2114.2,1055.2 L2116.2,1053.9 L2118.2,1052.6 L2120.2,1051.4 L2122.2,1050.1 L2124.2,1048.8 L2126.2,1047.4 L2128.2,1046.1 L2130.2,1044.8 L2132.2,1043.4 L2134.2,1042.1 L2136.2,1040.8 L2138.2,1039.4 L2140.2,1038.0 L2142.2,1036.7 L2144.2,1035.3 L2146.2,1033.9 L2148.2,1032.6 L2150.2,1031.2 L2152.2,1029.8 L2154.2,1028.5 L2156.2,1027.1 L2158.2,1025.7 L2160.2,1024.4 L2162.2,1023.0 L2164.2,1021.7 L2166.2,1020.3 L2168.2,1019.0 L2170.2,1017.6 L2172.2,1016.3 L2174.2,1015.0 L2176.2,1013.7 L2178.2,1012.4 L2180.2,1011.1 L2182.2,1009.8 L2184.2,1008.5 L2186.2,1007.3 L2188.2,1006.0 L2190.2,1004.8 L2192.2,1003.6 L2194.2,1002.4 L2196.2,1001.2 L2198.2,1000.0 L2200.2,998.9 L2202.2,997.7 L2204.2,996.6 L2206.2,995.5 L2208.2,994.5 L2210.2,993.4 L2212.2,992.4 L2214.2,991.4 L2216.2,990.4 L2218.2,989.4 L2220.2,988.5 L2222.2,987.6 L2224.2,986.7 L2226.2,985.8 L2228.2,985.0 L2230.2,984.2 L2232.2,983.4 L2234.2,982.7 L2236.2,981.9 L2238.2,981.3 L2240.2,980.6 L2242.2,980.0 L2244.2,979.4 L2246.2,978.8 L2248.2,978.3 L2250.2,977.8 L2252.2,977.4 L2254.2,977.0 L2256.2,976.6 L2258.2,976.3 L2260.2,976.0 L2262.2,975.7 L2264.2,975.5 L2266.2,975.3 L2268.2,975.2 L2270.2,975.1 L2272.2,975.0 L2274.2,975.0 L2276.2,975.0 L2278.2,975.0 L2280.2,975.1 L2282.2,975.3 L2284.2,975.4 L2286.2,975.7 L2288.2,975.9 L2290.2,976.2 L2292.2,976.5 L2294.2,976.9 L2296.2,977.3 L2298.2,977.8 L2300.2,978.3 L2302.2,978.8 L2304.2,979.4 L2306.2,980.0 L2308.2,980.6 L2310.2,981.3 L2312.2,982.1 L2314.2,982.8 L2316.2,983.7 L2318.2,984.5 L2320.2,985.4 L2322.2,986.4 L2324.2,987.3 L2326.2,988.4 L2328.2,989.4 L2330.2,990.5 L2332.2,991.7 L2334.2,992.9 L2336.2,994.1 L2338.2,995.3 L2340.2,996.6 L2342.2,998.0 L2344.2,999.3 L2346.2,1000.8 L2348.2,1002.2 L2350.2,1003.7 L2352.2,1005.2 L2354.2,1006.7 L2356.2,1008.3 L2358.2,1009.9 L2360.2,1011.5 L2362.2,1013.2 L2364.2,1014.8 L2366.2,1016.5 L2368.2,1018.3 L2370.2,1020.1 L2372.2,1021.8 L2374.2,1023.7 L2376.2,1025.5 L2378.2,1027.4 L2380.2,1029.2 L2382.2,1031.2 L2384.2,1033.1 L2386.2,1035.0 L2388.2,1037.0 L2390.2,1039.0 L2392.2,1041.0 L2394.2,1043.0 L2396.2,1045.0 L2398.2,1047.1 L2400.2,1049.2 L2402.2,1051.3 L2404.2,1053.3 L2406.2,1055.5 L2408.2,1057.6 L2410.2,1059.7 L2412.2,1061.9 L2414.2,1064.0 L2416.2,1066.2 L2418.2,1068.4 L2420.2,1070.6 L2422.2,1072.8 L2424.2,1075.0 L2426.2,1077.2 L2428.2,1079.5 L2430.2,1081.7 L2432.2,1084.0 L2434.2,1086.3 L2436.2,1088.5 L2438.2,1090.8 L2440.2,1093.1 L2442.2,1095.4 L2444.2,1097.7 L2446.2,1100.0 L2448.2,1102.3 L2450.2,1104.6 L2452.2,1107.0 L2454.2,1109.3 L2456.2,1111.6 L2458.2,1114.0 L2460.2,1116.3 L2462.2,1118.7 L2464.2,1121.0 L2466.2,1123.4 L2468.2,1125.7 L2470.2,1128.1 L2472.2,1130.5 L2474.2,1132.8 L2476.2,1135.2 L2478.2,1137.6 L2480.2,1139.9 L2482.2,1142.3 L2484.2,1144.7 L2486.2,1147.0 L2488.2,1149.4 L2490.2,1151.7 L2492.2,1154.1 L2494.2,1156.5 L2496.2,1158.8 L2498.2,1161.2 L2500.2,1163.5 L2502.2,1165.8 L2504.2,1168.2 L2506.2,1170.5 L2508.2,1172.8 L2510.2,1175.1 L2512.2,1177.4 L2514.2,1179.7 L2516.2,1182.0 L2518.2,1184.3 L2520.2,1186.6 L2522.2,1188.8 L2524.2,1191.1 L2526.2,1193.3 L2528.2,1195.6 L2530.2,1197.8 L2532.2,1200.0 L2534.2,1202.2 L2536.2,1204.4 L2538.2,1206.6 L2540.2,1208.7 L2542.2,1210.9 L2544.2,1213.0 L2546.2,1215.1 L2548.2,1217.2 L2550.2,1219.3 L2552.2,1221.4 L2554.2,1223.4 L2556.2,1225.4 L2558.2,1227.5 L2560.2,1229.5 L2562.2,1231.4 L2564.2,1233.4 L2566.2,1235.3 L2568.2,1237.3 L2570.2,1239.2 L2572.2,1241.0 L2574.2,1242.9 L2576.2,1244.7 L2578.2,1246.6 L2580.2,1248.3 L2582.2,1250.1 L2584.2,1251.9 L2586.2,1253.6 L2588.2,1255.3 L2590.2,1257.0 L2592.2,1258.7 L2594.2,1260.4 L2596.2,1262.0 L2598.2,1263.6 L2600.2,1265.2 L2602.2,1266.8 L2604.2,1268.4 L2606.2,1269.9 L2608.2,1271.5 L2610.2,1273.0 L2612.2,1274.5 L2614.2,1276.0 L2616.2,1277.4 L2618.2,1278.9 L2620.2,1280.3 L2622.2,1281.7 L2624.2,1283.1 L2626.2,1284.5 L2628.2,1285.9 L2630.2,1287.3 L2632.2,1288.6 L2634.2,1289.9 L2636.2,1291.2 L2638.2,1292.5 L2640.2,1293.8 L2642.2,1295.1 L2644.2,1296.4 L2646.2,1297.6 L2648.2,1298.8 L2650.2,1300.1 L2652.2,1301.3 L2654.2,1302.5 L2656.2,1303.7 L2658.2,1304.8 L2660.2,1306.0 L2662.2,1307.1 L2664.2,1308.3 L2666.2,1309.4 L2668.2,1310.5 L2670.2,1311.6 L2672.2,1312.7 L2674.2,1313.8 L2676.2,1314.9 L2678.2,1316.0 L2680.2,1317.0 L2682.2,1318.1 L2684.2,1319.1 L2686.2,1320.2 L2688.2,1321.2 L2690.2,1322.2 L2692.2,1323.2 L2694.2,1324.2 L2696.2,1325.2 L2698.2,1326.2 L2700.2,1327.2 L2702.2,1328.1 L2704.2,1329.1 L2706.2,1330.1 L2708.2,1331.0 L2710.2,1332.0 L2712.2,1332.9 L2714.2,1333.9 L2716.2,1334.8 L2718.2,1335.7 L2720.2,1336.6 L2722.2,1337.6 L2724.2,1338.5 L2726.2,1339.4 L2728.2,1340.3 L2730.2,1341.2 L2732.2,1342.1 L2734.2,1343.0 L2736.2,1343.9 L2738.2,1344.8 L2740.2,1345.7 L2742.2,1346.6 L2744.2,1347.5 L2746.2,1348.3 L2748.2,1349.2 L2750.2,1350.1 L2752.2,1351.0 L2754.2,1351.9 L2756.2,1352.8 L2758.2,1353.6 L2760.2,1354.5 L2762.2,1355.4 L2764.2,1356.3 L2766.2,1357.2 L2768.2,1358.0 L2770.2,1358.9 L2772.2,1359.8 L2774.2,1360.7 L2776.2,1361.6 L2778.2,1362.5 L2780.2,1363.4 L2781.0,1363.7" stroke="#78FF50" stroke-dasharray="7 5"/>
<path d="M1528.5,54.1 L1530.5,61.1 L1532.5,68.1 L1534.5,75.0 L1536.5,81.9 L1538.5,88.7 L1540.5,95.5 L1542.5,102.3 L1544.5,109.1 L1546.5,115.8 L1548.5,122.5 L1550.5,129.2 L1552.5,135.8 L1554.5,142.4 L1556.5,149.0 L1558.5,155.5 L1560.5,162.0 L1562.5,168.5 L1564.5,174.9 L1566.5,181.3 L1568.5,187.7 L1570.5,194.0 L1572.5,200.3 L1574.5,206.6 L1576.5,212.8 L1578.5,219.1 L1580.5,225.2 L1582.5,231.4 L1584.5,237.5 L1586.5,243.6 L1588.5,249.7 L1590.5,255.7 L1592.5,261.7 L1594.5,267.7 L1596.5,273.6 L1598.5,279.5 L1600.5,285.4 L1602.5,291.3 L1604.5,297.1 L1606.5,302.9 L1608.5,308.6 L1610.5,314.4 L1612.5,320.1 L1614.5,325.7 L1616.5,331.4 L1618.5,337.0 L1620.5,342.6 L1622.5,348.1 L1624.5,353.7 L1626.5,359.2 L1628.5,364.6 L1630.5,370.1 L1632.5,375.5 L1634.5,380.9 L1636.5,386.3 L1638.5,391.6 L1640.5,396.9 L1642.5,402.3 L1644.5,407.5 L1646.5,412.8 L1648.5,418.1 L1650.5,423.3 L1652.5,428.5 L1654.5,433.7 L1656.5,438.9 L1658.5,444.1 L1660.5,449.2 L1662.5,454.4 L1664.5,459.5 L1666.5,464.6 L1668.5,469.7 L1670.5,474.8 L1672.5,479.9 L1674.5,485.0 L1676.5,490.1 L1678.5,495.1 L1680.5,500.2 L1682.5,505.3 L1684.5,510.3 L1686.5,515.4 L1688.5,520.4 L1690.5,525.4 L1692.5,530.4 L1694.5,535.4 L1696.5,540.4 L1698.5,545.4 L1700.5,550.3 L1702.5,555.3 L1704.5,560.2 L1706.5,565.0 L1708.5,569.9 L1710.5,574.7 L1712.5,579.5 L1714.5,584.3 L1716.5,589.1 L1718.5,593.8 L1720.5,598.5 L1722.5,603.2 L1724.5,607.8 L1726.5,612.5 L1728.5,617.1 L1730.5,621.7 L1732.5,626.4 L1734.5,631.0 L1736.5,635.7 L1738.5,640.3 L1740.5,645.0 L1742.5,649.8 L1744.5,654.5 L1746.5,659.3 L1748.5,664.0 L1750.5,668.8 L1752.5,673.6 L1754.5,678.5 L1756.5,683.3 L1758.5,688.1 L1760.5,693.0 L1762.5,697.8 L1764.5,702.7 L1766.5,707.5 L1768.5,712.4 L1770.5,717.2 L1772.5,722.1 L1774.5,726.9 L1776.5,731.8 L1778.5,736.6 L1780.5,741.4 L1782.5,746.2 L1784.5,751.1 L1786.5,755.8 L1788.5,760.6 L1790.5,765.4 L1792.5,770.1 L1794.5,774.8 L1796.5,779.5 L1798.5,784.1 L1800.5,788.8 L1802.5,793.4 L1804.5,797.9 L1806.5,802.4 L1808.5,806.9 L1810.5,811.3 L1812.5,815.7 L1814.5,820.1 L1816.5,824.4 L1818.5,828.6 L1820.5,832.8 L1822.5,837.0 L1824.5,841.1 L1826.5,845.2 L1828.5,849.3 L1830.5,853.3 L1832.5,857.2 L1834.5,861.1 L1836.5,865.0 L1838.5,868.9 L1840.5,872.6 L1842.5,876.4 L1844.5,880.1 L1846.5,883.8 L1848.5,887.4 L1850.5,891.0 L1852.5,894.5 L1854.5,898.0 L1856.5,901.5 L1858.5,904.9 L1860.5,908.3 L1862.5,911.7 L1864.5,915.0 L1866.5,918.3 L1868.5,921.5 L1870.5,924.7 L1872.5,927.8 L1874.5,930.9 L1876.5,934.0 L1878.5,937.1 L1880.5,940.0 L1882.5,943.0 L1884.5,945.9 L1886.5,948.8 L1888.5,951.7 L1890.5,954.5 L1892.5,957.2 L1894.5,960.0 L1896.5,962.7 L1898.5,965.3 L1900.5,967.9 L1902.5,970.5 L1904.5,973.1 L1906.5,975.6 L1908.5,978.1 L1910.5,980.5 L1912.5,982.9 L1914.5,985.3 L1916.5,987.6 L1918.5,989.9 L1920.5,992.2 L1922.5,994.4 L1924.5,996.6 L1926.5,998.7 L1928.5,1000.9 L1930.5,1002.9 L1932.5,1005.0 L1934.5,1007.0 L1936.5,1008.9 L1938.5,1010.9 L1940.5,1012.7 L1942.5,1014.6 L1944.5,1016.4 L1946.5,1018.2 L1948.5,1019.9 L1950.5,1021.6 L1952.5,1023.2 L1954.5,1024.8 L1956.5,1026.4 L1958.5,1027.9 L1960.5,1029.4 L1962.5,1030.8 L1964.5,1032.2 L1966.5,1033.5 L1968.5,1034.8 L1970.5,1036.1 L1972.5,1037.3 L1974.5,1038.5 L1976.5,1039.6 L1978.5,1040.7 L1980.5,1041.7 L1982.5,1042.7 L1984.5,1043.6 L1986.5,1044.5 L1988.5,1045.4 L1990.5,1046.2 L1992.5,1047.0 L1994.5,1047.7 L1996.5,1048.4 L1998.5,1049.1 L2000.5,1049.7 L2002.5,1050.2 L2004.5,1050.8 L2006.5,1051.3 L2008.5,1051.7 L2010.5,1052.1 L2012.5,1052.5 L2014.5,1052.8 L2016.5,1053.1 L2018.5,1053.4 L2020.5,1053.6 L2022.5,1053.8 L2024.5,1054.0 L2026.5,1054.1 L2028.5,1054.2 L2030.5,1054.2 L2032.5,1054.2 L2034.5,1054.2 L2036.5,1054.2 L2038.5,1054.1 L2040.5,1054.0 L2042.5,1053.9 L2044.5,1053.7 L2046.5,1053.5 L2048.5,1053.2 L2050.5,1053.0 L2052.5,1052.7 L2054.5,1052.3 L2056.5,1052.0 L2058.5,1051.6 L2060.5,1051.2 L2062.5,1050.8 L2064.5,1050.3 L2066.5,1049.8 L2068.5,1049.3 L2070.5,1048.7 L2072.5,1048.2 L2074.5,1047.6 L2076.5,1047.0 L2078.5,1046.3 L2080.5,1045.7 L2082.5,1045.0 L2084.5,1044.3 L2086.5,1043.5 L2088.5,1042.8 L2090.5,1042.0 L2092.5,1041.2 L2094.5,1040.4 L2096.5,1039.5 L2098.5,1038.7 L2100.5,1037.8 L2102.5,1036.9 L2104.5,1036.0 L2106.5,1035.0 L2108.5,1034.1 L2110.5,1033.1 L2112.5,1032.1 L2114.5,1031.1 L2116.5,1030.1 L2118.5,1029.1 L2120.5,1028.0 L2122.5,1027.0 L2124.5,1025.9 L2126.5,1024.8 L2128.5,1023.7 L2130.5,1022.6 L2132.5,1021.5 L2134.5,1020.3 L2136.5,1019.2 L2138.5,1018.1 L2140.5,1016.9 L2142.5,1015.7 L2144.5,1014.6 L2146.5,1013.4 L2148.5,1012.2 L2150.5,1011.1 L2152.5,1009.9 L2154.5,1008.7 L2156.5,1007.5 L2158.5,1006.4 L2160.5,1005.2 L2162.5,1004.0 L2164.5,1002.8 L2166.5,1001.7 L2168.5,1000.5 L2170.5,999.3 L2172.5,998.2 L2174.5,997.0 L2176.5,995.9 L2178.5,994.8 L2180.5,993.6 L2182.5,992.5 L2184.5,991.4 L2186.5,990.3 L2188.5,989.2 L2190.5,988.1 L2192.5,987.1 L2194.5,986.0 L2196.5,985.0 L2198.5,984.0 L2200.5,983.0 L2202.5,982.0 L2204.5,981.0 L2206.5,980.1 L2208.5,979.1 L2210.5,978.2 L2212.5,977.3 L2214.5,976.5 L2216.5,975.6 L2218.5,974.8 L2220.5,974.0 L2222.5,973.2 L2224.5,972.4 L2226.5,971.7 L2228.5,971.0 L2230.5,970.3 L2232.5,969.7 L2234.5,969.1 L2236.5,968.5 L2238.5,967.9 L2240.5,967.4 L2242.5,966.9 L2244.5,966.4 L2246.5,966.0 L2248.5,965.6 L2250.5,965.2 L2252.5,964.9 L2254.5,964.6 L2256.5,964.3 L2258.5,964.1 L2260.5,963.9 L2262.5,963.8 L2264.5,963.7 L2266.5,963.6 L2268.5,963.6 L2270.5,963.6 L2272.5,963.6 L2274.5,963.7 L2276.5,963.8 L2278.5,964.0 L2280.5,964.2 L2282.5,964.4 L2284.5,964.7 L2286.5,965.0 L2288.5,965.3 L2290.5,965.7 L2292.5,966.2 L2294.5,966.6 L2296.5,967.1 L2298.5,967.6 L2300.5,968.2 L2302.5,968.8 L2304.5,969.5 L2306.5,970.2 L2308.5,970.9 L2310.5,971.6 L2312.5,972.4 L2314.5,973.3 L2316.5,974.1 L2318.5,975.0 L2320.5,976.0 L2322.5,977.0 L2324.5,978.0 L2326.5,979.1 L2328.5,980.1 L2330.5,981.3 L2332.5,982.4 L2334.5,983.6 L2336.5,984.9 L2338.5,986.1 L2340.5,987.5 L2342.5,988.8 L2344.5,990.2 L2346.5,991.6 L2348.5,993.0 L2350.5,994.5 L2352.5,996.0 L2354.5,997.5 L2356.5,999.1 L2358.5,1000.7 L2360.5,1002.3 L2362.5,1003.9 L2364.5,1005.6 L2366.5,1007.3 L2368.5,1009.0 L2370.5,1010.8 L2372.5,1012.6 L2374.5,1014.4 L2376.5,1016.2 L2378.5,1018.1 L2380.5,1020.0 L2382.5,1021.9 L2384.5,1023.8 L2386.5,1025.8 L2388.5,1027.8 L2390.5,1029.8 L2392.5,1031.8 L2394.5,1033.8 L2396.5,1035.9 L2398.5,1038.0 L2400.5,1040.1 L2402.5,1042.2 L2404.5,1044.4 L2406.5,1046.5 L2408.5,1048.7 L2410.5,1050.9 L2412.5,1053.1 L2414.5,1055.3 L2416.5,1057.6 L2418.5,1059.8 L2420.5,1062.1 L2422.5,1064.4 L2424.5,1066.7 L2426.5,1069.0 L2428.5,1071.3 L2430.5,1073.7 L2432.5,1076.0 L2434.5,1078.4 L2436.5,1080.8 L2438.5,1083.1 L2440.5,1085.5 L2442.5,1087.9 L2444.5,1090.3 L2446.5,1092.7 L2448.5,1095.1 L2450.5,1097.6 L2452.5,1100.0 L2454.5,1102.4 L2456.5,1104.8 L2458.5,1107.3 L2460.5,1109.7 L2462.5,1112.2 L2464.5,1114.6 L2466.5,1117.0 L2468.5,1119.5 L2470.5,1121.9 L2472.5,1124.4 L2474.5,1126.8 L2476.5,1129.3 L2478.5,1131.7 L2480.5,1134.2 L2482.5,1136.6 L2484.5,1139.0 L2486.5,1141.5 L2488.5,1143.9 L2490.5,1146.3 L2492.5,1148.7 L2494.5,1151.2 L2496.5,1153.6 L2498.5,1156.0 L2500.5,1158.4 L2502.5,1160.7 L2504.5,1163.1 L2506.5,1165.5 L2508.5,1167.9 L2510.5,1170.2 L2512.5,1172.6 L2514.5,1174.9 L2516.5,1177.3 L2518.5,1179.6 L2520.5,1181.9 L2522.5,1184.2 L2524.5,1186.5 L2526.5,1188.7 L2528.5,1191.0 L2530.5,1193.3 L2532.5,1195.5 L2534.5,1197.7 L2536.5,1199.9 L2538.5,1202.1 L2540.5,1204.3 L2542.5,1206.5 L2544.5,1208.6 L2546.5,1210.8 L2548.5,1212.9 L2550.5,1215.0 L2552.5,1217.1 L2554.5,1219.2 L2556.5,1221.2 L2558.5,1223.2 L2560.5,1225.3 L2562.5,1227.3 L2564.5,1229.2 L2566.5,1231.2 L2568.5,1233.1 L2570.5,1235.0 L2572.5,1236.9 L2574.5,1238.8 L2576.5,1240.6 L2578.5,1242.5 L2580.5,1244.3 L2582.5,1246.1 L2584.5,1247.8 L2586.5,1249.6 L2588.5,1251.3 L2590.5,1253.0 L2592.5,1254.7 L2594.5,1256.4 L2596.5,1258.0 L2598.5,1259.6 L2600.5,1261.3 L2602.5,1262.8 L2604.5,1264.4 L2606.5,1266.0 L2608.5,1267.5 L2610.5,1269.0 L2612.5,1270.5 L2614.5,1272.0 L2616.5,1273.5 L2618.5,1274.9 L2620.5,1276.4 L2622.5,1277.8 L2624.5,1279.2 L2626.5,1280.6 L2628.5,1281.9 L2630.5,1283.3 L2632.5,1284.6 L2634.5,1285.9 L2636.5,1287.2 L2638.5,1288.5 L2640.5,1289.8 L2642.5,1291.0 L2644.5,1292.3 L2646.5,1293.5 L2648.5,1294.7 L2650.5,1295.9 L2652.5,1297.1 L2654.5,1298.3 L2656.5,1299.5 L2658.5,1300.6 L2660.5,1301.8 L2662.5,1302.9 L2664.5,1304.0 L2666.5,1305.1 L2668.5,1306.2 L2670.5,1307.3 L2672.5,1308.3 L2674.5,1309.4 L2676.5,1310.4 L2678.5,1311.4 L2680.5,1312.5 L2682.5,1313.5 L2684.5,1314.5 L2686.5,1315.5 L2688.5,1316.5 L2690.5,1317.4 L2692.5,1318.4 L2694.5,1319.4 L2696.5,1320.3 L2698.5,1321.3 L2700.5,1322.2 L2702.5,1323.2 L2704.5,1324.1 L2706.5,1325.0 L2708.5,1325.9 L2710.5,1326.9 L2712.5,1327.8 L2714.5,1328.7 L2716.5,1329.6 L2718.5,1330.5 L2720.5,1331.4 L2722.5,1332.3 L2724.5,1333.2 L2726.5,1334.1 L2728.5,1335.0 L2730.5,1335.9 L2732.5,1336.8 L2734.5,1337.6 L2736.5,1338.5 L2738.5,1339.4 L2740.5,1340.3 L2742.5,1341.2 L2744.5,1342.1 L2746.5,1343.0 L2748.5,1343.9 L2750.5,1344.8 L2752.5,1345.7 L2754.5,1346.6 L2756.5,1347.5 L2758.5,1348.5 L2760.5,1349.4 L2762.5,1350.3 L2764.5,1351.2 L2766.5,1352.2 L2768.5,1353.1 L2770.5,1354.1 L2772.5,1355.0 L2774.5,1356.0 L2776.5,1357.0 L2778.5,1358.0 L2780.5,1358.9 L2781.0,1359.2" stroke="#F23C28" stroke-dasharray="7 5"/>
<path d="M1528.5,145.8 L1530.5,144.9 L1532.5,144.0 L1534.5,143.1 L1536.5,142.2 L1538.5,141.4 L1540.5,140.6 L1542.5,139.8 L1544.5,139.0 L1546.5,138.3 L1548.5,137.5 L1550.5,136.8 L1552.5,136.2 L1554.5,135.5 L1556.5,134.9 L1558.5,134.2 L1560.5,133.7 L1562.5,133.1 L1564.5,132.5 L1566.5,132.0 L1568.5,131.5 L1570.5,131.0 L1572.5,130.5 L1574.5,130.1 L1576.5,129.7 L1578.5,129.3 L1580.5,128.9 L1582.5,128.5 L1584.5,128.2 L1586.5,127.8 L1588.5,127.5 L1590.5,127.2 L1592.5,127.0 L1594.5,126.7 L1596.5,126.5 L1598.5,126.3 L1600.5,126.1 L1602.5,125.9 L1604.5,125.8 L1606.5,125.6 L1608.5,125.5 L1610.5,125.4 L1612.5,125.4 L1614.5,125.3 L1616.5,125.2 L1618.5,125.2 L1620.5,125.2 L1622.5,125.2 L1624.5,125.2 L1626.5,125.3 L1628.5,125.3 L1630.5,125.4 L1632.5,125.5 L1634.5,125.6 L1636.5,125.7 L1638.5,125.9 L1640.5,126.0 L1642.5,126.2 L1644.5,126.4 L1646.5,126.6 L1648.5,126.8 L1650.5,127.1 L1652.5,127.3 L1654.5,127.6 L1656.5,127.9 L1658.5,128.1 L1660.5,128.5 L1662.5,128.8 L1664.5,129.1 L1666.5,129.5 L1668.5,129.9 L1670.5,130.3 L1672.5,130.7 L1674.5,131.1 L1676.5,131.5 L1678.5,132.0 L1680.5,132.4 L1682.5,132.9 L1684.5,133.4 L1686.5,134.0 L1688.5,134.5 L1690.5,135.1 L1692.5,135.6 L1694.5,136.2 L1696.5,136.8 L1698.5,137.5 L1700.5,138.1 L1702.5,138.8 L1704.5,139.4 L1706.5,140.1 L1708.5,140.8 L1710.5,141.6 L1712.5,142.3 L1714.5,143.1 L1716.5,143.9 L1718.5,144.7 L1720.5,145.5 L1722.5,146.4 L1724.5,147.2 L1726.5,148.1 L1728.5,149.0 L1730.5,149.9 L1732.5,150.8 L1734.5,151.8 L1736.5,152.8 L1738.5,153.8 L1740.5,154.8 L1742.5,155.8 L1744.5,156.9 L1746.5,158.0 L1748.5,159.1 L1750.5,160.2 L1752.5,161.3 L1754.5,162.5 L1756.5,163.6 L1758.5,164.8 L1760.5,166.0 L1762.5,167.3 L1764.5,168.5 L1766.5,169.8 L1768.5,171.1 L1770.5,172.4 L1772.5,173.8 L1774.5,175.1 L1776.5,176.5 L1778.5,177.9 L1780.5,179.3 L1782.5,180.8 L1784.5,182.2 L1786.5,183.7 L1788.5,185.2 L1790.5,186.7 L1792.5,188.3 L1794.5,189.8 L1796.5,191.4 L1798.5,193.0 L1800.5,194.6 L1802.5,196.2 L1804.5,197.9 L1806.5,199.6 L1808.5,201.3 L1810.5,203.0 L1812.5,204.7 L1814.5,206.4 L1816.5,208.2 L1818.5,210.0 L1820.5,211.8 L1822.5,213.6 L1824.5,215.4 L1826.5,217.3 L1828.5,219.1 L1830.5,221.0 L1832.5,222.9 L1834.5,224.8 L1836.5,226.8 L1838.5,228.7 L1840.5,230.7 L1842.5,232.7 L1844.5,234.7 L1846.5,236.7 L1848.5,238.8 L1850.5,240.8 L1852.5,242.9 L1854.5,245.0 L1856.5,247.1 L1858.5,249.2 L1860.5,251.3 L1862.5,253.5 L1864.5,255.7 L1866.5,257.8 L1868.5,260.0 L1870.5,262.3 L1872.5,264.5 L1874.5,266.7 L1876.5,269.0 L1878.5,271.3 L1880.5,273.5 L1882.5,275.9 L1884.5,278.2 L1886.5,280.5 L1888.5,282.9 L1890.5,285.2 L1892.5,287.6 L1894.5,290.0 L1896.5,292.4 L1898.5,294.8 L1900.5,297.2 L1902.5,299.7 L1904.5,302.1 L1906.5,304.6 L1908.5,307.1 L1910.5,309.5 L1912.5,312.0 L1914.5,314.6 L1916.5,317.1 L1918.5,319.6 L1920.5,322.1 L1922.5,324.7 L1924.5,327.3 L1926.5,329.8 L1928.5,332.4 L1930.5,335.0 L1932.5,337.6 L1934.5,340.2 L1936.5,342.8 L1938.5,345.4 L1940.5,348.0 L1942.5,350.6 L1944.5,353.3 L1946.5,355.9 L1948.5,358.6 L1950.5,361.2 L1952.5,363.9 L1954.5,366.5 L1956.5,369.2 L1958.5,371.9 L1960.5,374.5 L1962.5,377.2 L1964.5,379.9 L1966.5,382.6 L1968.5,385.3 L1970.5,388.0 L1972.5,390.7 L1974.5,393.4 L1976.5,396.1 L1978.5,398.8 L1980.5,401.5 L1982.5,404.2 L1984.5,406.9 L1986.5,409.6 L1988.5,412.3 L1990.5,415.0 L1992.5,417.6 L1994.5,420.3 L1996.5,423.0 L1998.5,425.7 L2000.5,428.4 L2002.5,431.1 L2004.5,433.8 L2006.5,436.5 L2008.5,439.2 L2010.5,441.8 L2012.5,444.5 L2014.5,447.2 L2016.5,449.8 L2018.5,452.5 L2020.5,455.1 L2022.5,457.7 L2024.5,460.4 L2026.5,463.0 L2028.5,465.6 L2030.5,468.2 L2032.5,470.8 L2034.5,473.4 L2036.5,476.0 L2038.5,478.6 L2040.5,481.1 L2042.5,483.7 L2044.5,486.2 L2046.5,488.8 L2048.5,491.3 L2050.5,493.8 L2052.5,496.3 L2054.5,498.8 L2056.5,501.3 L2058.5,503.8 L2060.5,506.2 L2062.5,508.7 L2064.5,511.1 L2066.5,513.6 L2068.5,516.0 L2070.5,518.4 L2072.5,520.8 L2074.5,523.2 L2076.5,525.6 L2078.5,527.9 L2080.5,530.3 L2082.5,532.6 L2084.5,535.0 L2086.5,537.3 L2088.5,539.6 L2090.5,541.9 L2092.5,544.2 L2094.5,546.5 L2096.5,548.7 L2098.5,551.0 L2100.5,553.2 L2102.5,555.5 L2104.5,557.7 L2106.5,559.9 L2108.5,562.1 L2110.5,564.3 L2112.5,566.5 L2114.5,568.6 L2116.5,570.8 L2118.5,572.9 L2120.5,575.1 L2122.5,577.2 L2124.5,579.3 L2126.5,581.4 L2128.5,583.5 L2130.5,585.6 L2132.5,587.6 L2134.5,589.7 L2136.5,591.7 L2138.5,593.7 L2140.5,595.7 L2142.5,597.7 L2144.5,599.7 L2146.5,601.7 L2148.5,603.7 L2150.5,605.6 L2152.5,607.6 L2154.5,609.5 L2156.5,611.4 L2158.5,613.3 L2160.5,615.2 L2162.5,617.1 L2164.5,618.9 L2166.5,620.8 L2168.5,622.6 L2170.5,624.5 L2172.5,626.3 L2174.5,628.1 L2176.5,629.9 L2178.5,631.7 L2180.5,633.4 L2182.5,635.2 L2184.5,636.9 L2186.5,638.7 L2188.5,640.4 L2190.5,642.1 L2192.5,643.8 L2194.5,645.5 L2196.5,647.1 L2198.5,648.8 L2200.5,650.4 L2202.5,652.1 L2204.5,653.7 L2206.5,655.3 L2208.5,656.9 L2210.5,658.5 L2212.5,660.0 L2214.5,661.6 L2216.5,663.2 L2218.5,664.7 L2220.5,666.2 L2222.5,667.7 L2224.5,669.2 L2226.5,670.7 L2228.5,672.2 L2230.5,673.6 L2232.5,675.1 L2234.5,676.5 L2236.5,677.9 L2238.5,679.3 L2240.5,680.7 L2242.5,682.1 L2244.5,683.5 L2246.5,684.9 L2248.5,686.2 L2250.5,687.5 L2252.5,688.9 L2254.5,690.2 L2256.5,691.5 L2258.5,692.8 L2260.5,694.1 L2262.5,695.4 L2264.5,696.7 L2266.5,698.0 L2268.5,699.2 L2270.5,700.5 L2272.5,701.8 L2274.5,703.0 L2276.5,704.3 L2278.5,705.6 L2280.5,706.8 L2282.5,708.1 L2284.5,709.3 L2286.5,710.6 L2288.5,711.9 L2290.5,713.1 L2292.5,714.4 L2294.5,715.6 L2296.5,716.9 L2298.5,718.2 L2300.5,719.5 L2302.5,720.7 L2304.5,722.0 L2306.5,723.3 L2308.5,724.6 L2310.5,725.9 L2312.5,727.2 L2314.5,728.6 L2316.5,729.9 L2318.5,731.2 L2320.5,732.6 L2322.5,734.0 L2324.5,735.3 L2326.5,736.7 L2328.5,738.1 L2330.5,739.5 L2332.5,741.0 L2334.5,742.4 L2336.5,743.8 L2338.5,745.3 L2340.5,746.8 L2342.5,748.3 L2344.5,749.7 L2346.5,751.2 L2348.5,752.7 L2350.5,754.3 L2352.5,755.8 L2354.5,757.3 L2356.5,758.8 L2358.5,760.4 L2360.5,761.9 L2362.5,763.5 L2364.5,765.0 L2366.5,766.6 L2368.5,768.1 L2370.5,769.7 L2372.5,771.2 L2374.5,772.8 L2376.5,774.3 L2378.5,775.9 L2380.5,777.4 L2382.5,779.0 L2384.5,780.5 L2386.5,782.1 L2388.5,783.6 L2390.5,785.2 L2392.5,786.7 L2394.5,788.3 L2396.5,789.8 L2398.5,791.4 L2400.5,793.0 L2402.5,794.6 L2404.5,796.2 L2406.5,797.8 L2408.5,799.4 L2410.5,801.0 L2412.5,802.7 L2414.5,804.3 L2416.5,806.0 L2418.5,807.7 L2420.5,809.4 L2422.5,811.2 L2424.5,812.9 L2426.5,814.7 L2428.5,816.5 L2430.5,818.3 L2432.5,820.2 L2434.5,822.1 L2436.5,824.0 L2438.5,825.9 L2440.5,827.8 L2442.5,829.8 L2444.5,831.8 L2446.5,833.9 L2448.5,835.9 L2450.5,838.0 L2452.5,840.1 L2454.5,842.2 L2456.5,844.4 L2458.5,846.5 L2460.5,848.7 L2462.5,851.0 L2464.5,853.2 L2466.5,855.5 L2468.5,857.8 L2470.5,860.1 L2472.5,862.4 L2474.5,864.8 L2476.5,867.2 L2478.5,869.6 L2480.5,872.0 L2482.5,874.5 L2484.5,876.9 L2486.5,879.4 L2488.5,881.9 L2490.5,884.5 L2492.5,887.0 L2494.5,889.6 L2496.5,892.2 L2498.5,894.8 L2500.5,897.5 L2502.5,900.2 L2504.5,902.9 L2506.5,905.6 L2508.5,908.3 L2510.5,911.0 L2512.5,913.8 L2514.5,916.6 L2516.5,919.4 L2518.5,922.2 L2520.5,925.1 L2522.5,928.0 L2524.5,930.8 L2526.5,933.7 L2528.5,936.7 L2530.5,939.6 L2532.5,942.5 L2534.5,945.5 L2536.5,948.5 L2538.5,951.4 L2540.5,954.4 L2542.5,957.4 L2544.5,960.3 L2546.5,963.3 L2548.5,966.3 L2550.5,969.3 L2552.5,972.3 L2554.5,975.2 L2556.5,978.2 L2558.5,981.1 L2560.5,984.1 L2562.5,987.0 L2564.5,989.9 L2566.5,992.8 L2568.5,995.7 L2570.5,998.6 L2572.5,1001.4 L2574.5,1004.2 L2576.5,1007.0 L2578.5,1009.8 L2580.5,1012.6 L2582.5,1015.4 L2584.5,1018.2 L2586.5,1020.9 L2588.5,1023.7 L2590.5,1026.4 L2592.5,1029.2 L2594.5,1031.9 L2596.5,1034.7 L2598.5,1037.4 L2600.5,1040.2 L2602.5,1043.0 L2604.5,1045.7 L2606.5,1048.5 L2608.5,1051.3 L2610.5,1054.1 L2612.5,1056.9 L2614.5,1059.8 L2616.5,1062.6 L2618.5,1065.5 L2620.5,1068.4 L2622.5,1071.3 L2624.5,1074.2 L2626.5,1077.2 L2628.5,1080.1 L2630.5,1083.1 L2632.5,1086.1 L2634.5,1089.2 L2636.5,1092.2 L2638.5,1095.3 L2640.5,1098.3 L2642.5,1101.4 L2644.5,1104.5 L2646.5,1107.7 L2648.5,1110.8 L2650.5,1113.9 L2652.5,1117.1 L2654.5,1120.2 L2656.5,1123.4 L2658.5,1126.6 L2660.5,1129.8 L2662.5,1133.0 L2664.5,1136.2 L2666.5,1139.4 L2668.5,1142.6 L2670.5,1145.9 L2672.5,1149.1 L2674.5,1152.3 L2676.5,1155.5 L2678.5,1158.8 L2680.5,1162.0 L2682.5,1165.3 L2684.5,1168.5 L2686.5,1171.7 L2688.5,1175.0 L2690.5,1178.2 L2692.5,1181.4 L2694.5,1184.6 L2696.5,1187.9 L2698.5,1191.1 L2700.5,1194.3 L2702.5,1197.5 L2704.5,1200.7 L2706.5,1203.9 L2708.5,1207.1 L2710.5,1210.2 L2712.5,1213.4 L2714.5,1216.6 L2716.5,1219.7 L2718.5,1222.9 L2720.5,1226.0 L2722.5,1229.2 L2724.5,1232.3 L2726.5,1235.4 L2728.5,1238.6 L2730.5,1241.7 L2732.5,1244.8 L2734.5,1247.9 L2736.5,1251.0 L2738.5,1254.1 L2740.5,1257.2 L2742.5,1260.3 L2744.5,1263.4 L2746.5,1266.4 L2748.5,1269.5 L2750.5,1272.6 L2752.5,1275.6 L2754.5,1278.7 L2756.5,1281.7 L2758.5,1284.8 L2760.5,1287.8 L2762.5,1290.8 L2764.5,1293.9 L2766.5,1296.9 L2768.5,1299.9 L2770.5,1302.9 L2772.5,1305.9 L2774.5,1308.9 L2776.5,1311.9 L2778.5,1314.9 L2780.5,1317.9 L2781.5,1319.4" stroke="#F23C28"/>
<path d="M1528.5,65.5 L1530.5,65.3 L1532.5,65.2 L1534.5,65.1 L1536.5,64.9 L1538.5,64.8 L1540.5,64.7 L1542.5,64.6 L1544.5,64.6 L1546.5,64.5 L1548.5,64.5 L1550.5,64.5 L1552.5,64.5 L1554.5,64.5 L1556.5,64.5 L1558.5,64.5 L1560.5,64.6 L1562.5,64.7 L1564.5,64.7 L1566.5,64.8 L1568.5,64.9 L1570.5,65.0 L1572.5,65.2 L1574.5,65.3 L1576.5,65.5 L1578.5,65.7 L1580.5,65.8 L1582.5,66.0 L1584.5,66.2 L1586.5,66.5 L1588.5,66.7 L1590.5,67.0 L1592.5,67.2 L1594.5,67.5 L1596.5,67.8 L1598.5,68.1 L1600.5,68.4 L1602.5,68.7 L1604.5,69.0 L1606.5,69.4 L1608.5,69.7 L1610.5,70.1 L1612.5,70.5 L1614.5,70.9 L1616.5,71.3 L1618.5,71.7 L1620.5,72.1 L1622.5,72.6 L1624.5,73.0 L1626.5,73.5 L1628.5,73.9 L1630.5,74.4 L1632.5,74.9 L1634.5,75.4 L1636.5,75.9 L1638.5,76.5 L1640.5,77.0 L1642.5,77.5 L1644.5,78.1 L1646.5,78.6 L1648.5,79.2 L1650.5,79.8 L1652.5,80.4 L1654.5,81.0 L1656.5,81.6 L1658.5,82.2 L1660.5,82.9 L1662.5,83.5 L1664.5,84.2 L1666.5,84.8 L1668.5,85.5 L1670.5,86.2 L1672.5,86.9 L1674.5,87.6 L1676.5,88.4 L1678.5,89.1 L1680.5,89.9 L1682.5,90.6 L1684.5,91.4 L1686.5,92.2 L1688.5,93.0 L1690.5,93.9 L1692.5,94.7 L1694.5,95.6 L1696.5,96.4 L1698.5,97.3 L1700.5,98.2 L1702.5,99.2 L1704.5,100.1 L1706.5,101.1 L1708.5,102.1 L1710.5,103.0 L1712.5,104.1 L1714.5,105.1 L1716.5,106.1 L1718.5,107.2 L1720.5,108.3 L1722.5,109.4 L1724.5,110.5 L1726.5,111.7 L1728.5,112.9 L1730.5,114.0 L1732.5,115.3 L1734.5,116.5 L1736.5,117.7 L1738.5,119.0 L1740.5,120.3 L1742.5,121.6 L1744.5,123.0 L1746.5,124.3 L1748.5,125.7 L1750.5,127.1 L1752.5,128.6 L1754.5,130.0 L1756.5,131.5 L1758.5,133.0 L1760.5,134.5 L1762.5,136.1 L1764.5,137.7 L1766.5,139.3 L1768.5,140.9 L1770.5,142.6 L1772.5,144.3 L1774.5,146.0 L1776.5,147.7 L1778.5,149.5 L1780.5,151.2 L1782.5,153.0 L1784.5,154.8 L1786.5,156.7 L1788.5,158.5 L1790.5,160.4 L1792.5,162.3 L1794.5,164.3 L1796.5,166.2 L1798.5,168.2 L1800.5,170.2 L1802.5,172.2 L1804.5,174.2 L1806.5,176.3 L1808.5,178.3 L1810.5,180.4 L1812.5,182.5 L1814.5,184.6 L1816.5,186.8 L1818.5,188.9 L1820.5,191.1 L1822.5,193.3 L1824.5,195.5 L1826.5,197.7 L1828.5,200.0 L1830.5,202.2 L1832.5,204.5 L1834.5,206.8 L1836.5,209.1 L1838.5,211.4 L1840.5,213.7 L1842.5,216.1 L1844.5,218.4 L1846.5,220.8 L1848.5,223.2 L1850.5,225.6 L1852.5,228.0 L1854.5,230.4 L1856.5,232.9 L1858.5,235.3 L1860.5,237.8 L1862.5,240.2 L1864.5,242.7 L1866.5,245.2 L1868.5,247.7 L1870.5,250.2 L1872.5,252.7 L1874.5,255.3 L1876.5,257.8 L1878.5,260.4 L1880.5,262.9 L1882.5,265.5 L1884.5,268.1 L1886.5,270.6 L1888.5,273.2 L1890.5,275.8 L1892.5,278.4 L1894.5,281.1 L1896.5,283.7 L1898.5,286.3 L1900.5,288.9 L1902.5,291.6 L1904.5,294.2 L1906.5,296.9 L1908.5,299.5 L1910.5,302.2 L1912.5,304.8 L1914.5,307.5 L1916.5,310.2 L1918.5,312.9 L1920.5,315.6 L1922.5,318.3 L1924.5,321.0 L1926.5,323.7 L1928.5,326.4 L1930.5,329.1 L1932.5,331.8 L1934.5,334.5 L1936.5,337.2 L1938.5,340.0 L1940.5,342.7 L1942.5,345.4 L1944.5,348.1 L1946.5,350.9 L1948.5,353.6 L1950.5,356.4 L1952.5,359.1 L1954.5,361.9 L1956.5,364.6 L1958.5,367.4 L1960.5,370.1 L1962.5,372.9 L1964.5,375.6 L1966.5,378.4 L1968.5,381.1 L1970.5,383.9 L1972.5,386.6 L1974.5,389.4 L1976.5,392.2 L1978.5,394.9 L1980.5,397.7 L1982.5,400.4 L1984.5,403.2 L1986.5,406.0 L1988.5,408.7 L1990.5,411.5 L1992.5,414.2 L1994.5,417.0 L1996.5,419.7 L1998.5,422.5 L2000.5,425.2 L2002.5,428.0 L2004.5,430.7 L2006.5,433.5 L2008.5,436.2 L2010.5,439.0 L2012.5,441.7 L2014.5,444.4 L2016.5,447.2 L2018.5,449.9 L2020.5,452.6 L2022.5,455.3 L2024.5,458.1 L2026.5,460.8 L2028.5,463.5 L2030.5,466.2 L2032.5,468.9 L2034.5,471.6 L2036.5,474.3 L2038.5,477.0 L2040.5,479.7 L2042.5,482.3 L2044.5,485.0 L2046.5,487.7 L2048.5,490.3 L2050.5,493.0 L2052.5,495.6 L2054.5,498.3 L2056.5,500.9 L2058.5,503.5 L2060.5,506.1 L2062.5,508.7 L2064.5,511.3 L2066.5,513.8 L2068.5,516.4 L2070.5,518.9 L2072.5,521.4 L2074.5,524.0 L2076.5,526.4 L2078.5,528.9 L2080.5,531.4 L2082.5,533.8 L2084.5,536.2 L2086.5,538.6 L2088.5,541.0 L2090.5,543.4 L2092.5,545.7 L2094.5,548.0 L2096.5,550.3 L2098.5,552.6 L2100.5,554.8 L2102.5,557.1 L2104.5,559.3 L2106.5,561.5 L2108.5,563.7 L2110.5,565.8 L2112.5,568.0 L2114.5,570.1 L2116.5,572.2 L2118.5,574.3 L2120.5,576.4 L2122.5,578.5 L2124.5,580.5 L2126.5,582.5 L2128.5,584.6 L2130.5,586.6 L2132.5,588.6 L2134.5,590.6 L2136.5,592.6 L2138.5,594.5 L2140.5,596.5 L2142.5,598.4 L2144.5,600.4 L2146.5,602.3 L2148.5,604.2 L2150.5,606.1 L2152.5,608.0 L2154.5,609.9 L2156.5,611.7 L2158.5,613.6 L2160.5,615.5 L2162.5,617.3 L2164.5,619.1 L2166.5,621.0 L2168.5,622.8 L2170.5,624.6 L2172.5,626.4 L2174.5,628.1 L2176.5,629.9 L2178.5,631.7 L2180.5,633.4 L2182.5,635.1 L2184.5,636.9 L2186.5,638.6 L2188.5,640.3 L2190.5,642.0 L2192.5,643.7 L2194.5,645.4 L2196.5,647.0 L2198.5,648.7 L2200.5,650.3 L2202.5,652.0 L2204.5,653.6 L2206.5,655.2 L2208.5,656.8 L2210.5,658.4 L2212.5,660.0 L2214.5,661.5 L2216.5,663.1 L2218.5,664.7 L2220.5,666.2 L2222.5,667.7 L2224.5,669.2 L2226.5,670.8 L2228.5,672.3 L2230.5,673.7 L2232.5,675.2 L2234.5,676.7 L2236.5,678.2 L2238.5,679.6 L2240.5,681.0 L2242.5,682.5 L2244.5,683.9 L2246.5,685.3 L2248.5,686.7 L2250.5,688.1 L2252.5,689.5 L2254.5,690.8 L2256.5,692.2 L2258.5,693.6 L2260.5,694.9 L2262.5,696.3 L2264.5,697.6 L2266.5,699.0 L2268.5,700.3 L2270.5,701.6 L2272.5,702.9 L2274.5,704.2 L2276.5,705.6 L2278.5,706.9 L2280.5,708.2 L2282.5,709.5 L2284.5,710.8 L2286.5,712.1 L2288.5,713.4 L2290.5,714.7 L2292.5,716.0 L2294.5,717.3 L2296.5,718.6 L2298.5,719.9 L2300.5,721.2 L2302.5,722.5 L2304.5,723.8 L2306.5,725.1 L2308.5,726.4 L2310.5,727.7 L2312.5,729.0 L2314.5,730.4 L2316.5,731.7 L2318.5,733.0 L2320.5,734.3 L2322.5,735.7 L2324.5,737.0 L2326.5,738.4 L2328.5,739.7 L2330.5,741.1 L2332.5,742.5 L2334.5,743.8 L2336.5,745.2 L2338.5,746.6 L2340.5,748.0 L2342.5,749.4 L2344.5,750.8 L2346.5,752.3 L2348.5,753.7 L2350.5,755.1 L2352.5,756.6 L2354.5,758.0 L2356.5,759.5 L2358.5,761.0 L2360.5,762.5 L2362.5,763.9 L2364.5,765.4 L2366.5,767.0 L2368.5,768.5 L2370.5,770.0 L2372.5,771.5 L2374.5,773.1 L2376.5,774.6 L2378.5,776.2 L2380.5,777.8 L2382.5,779.4 L2384.5,781.0 L2386.5,782.6 L2388.5,784.2 L2390.5,785.8 L2392.5,787.5 L2394.5,789.1 L2396.5,790.8 L2398.5,792.4 L2400.5,794.1 L2402.5,795.8 L2404.5,797.5 L2406.5,799.2 L2408.5,801.0 L2410.5,802.7 L2412.5,804.5 L2414.5,806.2 L2416.5,808.0 L2418.5,809.8 L2420.5,811.6 L2422.5,813.4 L2424.5,815.2 L2426.5,817.1 L2428.5,818.9 L2430.5,820.8 L2432.5,822.7 L2434.5,824.6 L2436.5,826.5 L2438.5,828.4 L2440.5,830.3 L2442.5,832.3 L2444.5,834.3 L2446.5,836.3 L2448.5,838.3 L2450.5,840.3 L2452.5,842.4 L2454.5,844.5 L2456.5,846.6 L2458.5,848.7 L2460.5,850.9 L2462.5,853.1 L2464.5,855.3 L2466.5,857.5 L2468.5,859.8 L2470.5,862.1 L2472.5,864.4 L2474.5,866.8 L2476.5,869.2 L2478.5,871.6 L2480.5,874.1 L2482.5,876.6 L2484.5,879.1 L2486.5,881.6 L2488.5,884.2 L2490.5,886.7 L2492.5,889.3 L2494.5,892.0 L2496.5,894.6 L2498.5,897.3 L2500.5,900.0 L2502.5,902.7 L2504.5,905.4 L2506.5,908.2 L2508.5,910.9 L2510.5,913.7 L2512.5,916.5 L2514.5,919.3 L2516.5,922.2 L2518.5,925.0 L2520.5,927.9 L2522.5,930.7 L2524.5,933.6 L2526.5,936.5 L2528.5,939.4 L2530.5,942.3 L2532.5,945.2 L2534.5,948.1 L2536.5,951.0 L2538.5,953.9 L2540.5,956.9 L2542.5,959.8 L2544.5,962.7 L2546.5,965.7 L2548.5,968.6 L2550.5,971.5 L2552.5,974.5 L2554.5,977.4 L2556.5,980.3 L2558.5,983.2 L2560.5,986.2 L2562.5,989.1 L2564.5,992.0 L2566.5,994.9 L2568.5,997.8 L2570.5,1000.6 L2572.5,1003.5 L2574.5,1006.4 L2576.5,1009.2 L2578.5,1012.1 L2580.5,1014.9 L2582.5,1017.7 L2584.5,1020.6 L2586.5,1023.4 L2588.5,1026.2 L2590.5,1029.1 L2592.5,1031.9 L2594.5,1034.7 L2596.5,1037.6 L2598.5,1040.4 L2600.5,1043.2 L2602.5,1046.1 L2604.5,1048.9 L2606.5,1051.8 L2608.5,1054.7 L2610.5,1057.6 L2612.5,1060.5 L2614.5,1063.4 L2616.5,1066.3 L2618.5,1069.2 L2620.5,1072.2 L2622.5,1075.2 L2624.5,1078.1 L2626.5,1081.1 L2628.5,1084.2 L2630.5,1087.2 L2632.5,1090.2 L2634.5,1093.3 L2636.5,1096.4 L2638.5,1099.4 L2640.5,1102.5 L2642.5,1105.6 L2644.5,1108.8 L2646.5,1111.9 L2648.5,1115.0 L2650.5,1118.2 L2652.5,1121.3 L2654.5,1124.5 L2656.5,1127.7 L2658.5,1130.9 L2660.5,1134.1 L2662.5,1137.3 L2664.5,1140.5 L2666.5,1143.7 L2668.5,1146.9 L2670.5,1150.1 L2672.5,1153.3 L2674.5,1156.6 L2676.5,1159.8 L2678.5,1163.1 L2680.5,1166.3 L2682.5,1169.5 L2684.5,1172.8 L2686.5,1176.0 L2688.5,1179.3 L2690.5,1182.5 L2692.5,1185.8 L2694.5,1189.0 L2696.5,1192.3 L2698.5,1195.5 L2700.5,1198.8 L2702.5,1202.0 L2704.5,1205.3 L2706.5,1208.5 L2708.5,1211.8 L2710.5,1215.0 L2712.5,1218.2 L2714.5,1221.4 L2716.5,1224.7 L2718.5,1227.9 L2720.5,1231.1 L2722.5,1234.3 L2724.5,1237.5 L2726.5,1240.7 L2728.5,1243.9 L2730.5,1247.1 L2732.5,1250.3 L2734.5,1253.5 L2736.5,1256.6 L2738.5,1259.8 L2740.5,1263.0 L2742.5,1266.1 L2744.5,1269.3 L2746.5,1272.4 L2748.5,1275.5 L2750.5,1278.6 L2752.5,1281.8 L2754.5,1284.9 L2756.5,1288.0 L2758.5,1291.1 L2760.5,1294.1 L2762.5,1297.2 L2764.5,1300.3 L2766.5,1303.3 L2768.5,1306.4 L2770.5,1309.4 L2772.5,1312.4 L2774.5,1315.4 L2776.5,1318.4 L2778.5,1321.4 L2780.5,1324.4 L2781.5,1325.9" stroke="#78FF50"/>
</g>
<rect x="0" y="0" width="1" height="1444" fill="#C8C8C8"/>
<rect x="2879" y="0" width="1" height="1444" fill="#1E1E1E"/>
<defs><linearGradient id="bsh" x1="0" y1="0" x2="0" y2="1"><stop offset="0" stop-color="#000" stop-opacity="0"/><stop offset="1" stop-color="#000" stop-opacity="0.07"/></linearGradient><linearGradient id="bshx" x1="0" y1="0" x2="1" y2="0"><stop offset="0" stop-color="#fff" stop-opacity="0"/><stop offset="0.25" stop-color="#fff" stop-opacity="1"/><stop offset="1" stop-color="#fff" stop-opacity="1"/></linearGradient><mask id="bmask"><rect x="0" y="1370" width="1440" height="74" fill="url(#bshx)"/></mask><linearGradient id="ttg" x1="0" y1="0" x2="1" y2="0"><stop offset="0" stop-color="#D4D4D4"/><stop offset="0.25" stop-color="#CBCBCB"/><stop offset="0.6" stop-color="#ADADAD"/><stop offset="1" stop-color="#9A9A9A"/></linearGradient><filter id="tsh" x="-10%" y="-30%" width="120%" height="180%"><feGaussianBlur in="SourceAlpha" stdDeviation="3"/><feOffset dy="2"/><feComponentTransfer><feFuncA type="linear" slope="0.25"/></feComponentTransfer><feMerge><feMergeNode/><feMergeNode in="SourceGraphic"/></feMerge></filter></defs>
<rect x="0" y="1370" width="1440" height="74" fill="url(#bsh)" mask="url(#bmask)"/>
<path d="M1352,1382 H1596 Q1604,1382 1604,1390 V1426 Q1604,1434 1596,1434 H1488 Q1482,1434 1476,1441 Q1470,1448 1464,1441 Q1458,1434 1452,1434 H1352 Q1344,1434 1344,1426 V1390 Q1344,1382 1352,1382 Z" fill="url(#ttg)" filter="url(#tsh)"/>
<text x="1371.2" y="1416.7" font-family="Liberation Sans" font-size="28" fill="#000" textLength="205" lengthAdjust="spacingAndGlyphs">Снимок экрана</text>
</svg></body></html>
